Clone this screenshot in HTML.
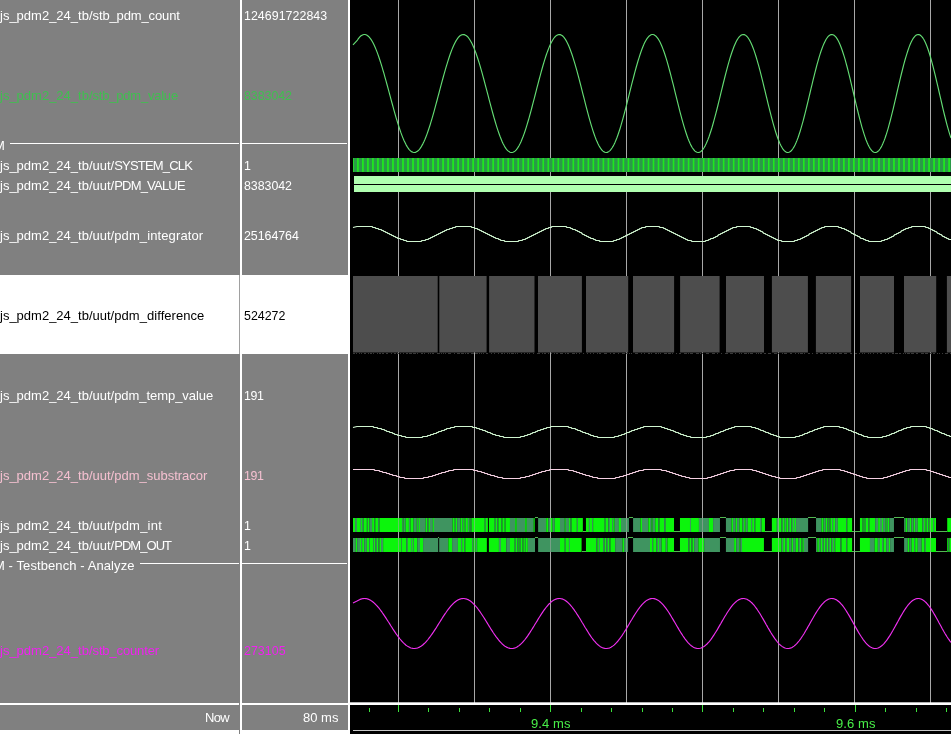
<!DOCTYPE html>
<html><head><meta charset="utf-8"><title>wave</title>
<style>
html,body{margin:0;padding:0;background:#000;}
body{width:951px;height:734px;position:relative;overflow:hidden;font-family:"Liberation Sans", sans-serif;}
.p{position:absolute;background:#808080}
.w{position:absolute;background:#fff}
.t{will-change:transform;position:absolute;font-size:13px;line-height:20px;height:20px;white-space:pre;color:#fff}
.v{font-size:12.4px}
</style></head><body>
<div class="p" style="left:0;top:0;width:239.5px;height:734px"></div>
<div class="p" style="left:241.5px;top:0;width:106px;height:734px"></div>
<div class="w" style="left:239.5px;top:0;width:2px;height:734px"></div>
<div class="w" style="left:347.5px;top:0;width:2.5px;height:734px"></div>
<!-- selected row -->
<div class="w" style="left:0;top:275px;width:347.5px;height:79px"></div>
<div class="p" style="left:239px;top:275px;width:1px;height:79px;background:#a0a0a0"></div>
<!-- group divider lines -->
<div class="w" style="left:10px;top:142.5px;width:228.5px;height:1.5px"></div>
<div class="w" style="left:241.5px;top:142.5px;width:105.5px;height:1.5px"></div>
<div class="w" style="left:139.5px;top:562.7px;width:99px;height:1.5px"></div>
<div class="w" style="left:241.5px;top:562.7px;width:105.5px;height:1.5px"></div>
<!-- now bar -->
<div class="w" style="left:0;top:703px;width:239px;height:2px"></div>
<div class="w" style="left:241.5px;top:703px;width:106px;height:2px"></div>
<div class="w" style="left:0;top:730px;width:239px;height:4px"></div>
<div class="w" style="left:242px;top:730px;width:105.5px;height:4px"></div>
<svg width="951" height="734" viewBox="0 0 951 734" style="position:absolute;left:0;top:0">
<g shape-rendering="crispEdges">
<rect x="398.0" y="0" width="1" height="702.5" fill="#a8a8a8"/>
<rect x="474.0" y="0" width="1" height="702.5" fill="#a8a8a8"/>
<rect x="550.0" y="0" width="1" height="702.5" fill="#a8a8a8"/>
<rect x="626.0" y="0" width="1" height="702.5" fill="#a8a8a8"/>
<rect x="702.0" y="0" width="1" height="702.5" fill="#a8a8a8"/>
<rect x="778.0" y="0" width="1" height="702.5" fill="#a8a8a8"/>
<rect x="854.0" y="0" width="1" height="702.5" fill="#a8a8a8"/>
<rect x="930.0" y="0" width="1" height="702.5" fill="#a8a8a8"/>
</g>
<defs>
<linearGradient id="clkg" gradientUnits="userSpaceOnUse" x1="355.4" x2="360.41" y1="0" y2="0" spreadMethod="repeat">
<stop offset="0" stop-color="#2a9a48"/><stop offset="0.25" stop-color="#2a9a48"/><stop offset="0.42" stop-color="#1ee81e"/><stop offset="0.58" stop-color="#1ee81e"/><stop offset="0.75" stop-color="#2a9a48"/><stop offset="1" stop-color="#2a9a48"/>
</linearGradient>
</defs>
<rect x="353" y="158" width="598" height="14" fill="url(#clkg)"/>
<g shape-rendering="crispEdges">
<rect x="354" y="176" width="597" height="16" fill="#b0ffb0"/>
<rect x="354" y="184" width="597" height="1" fill="#000"/>
</g>
<g id="grey">
<rect x="353.0" y="276" width="84.7" height="76.5" fill="#4d4d4d"/>
<rect x="439.3" y="276" width="47.3" height="76.5" fill="#4d4d4d"/>
<rect x="489.1" y="276" width="45.4" height="76.5" fill="#4d4d4d"/>
<rect x="538.0" y="276" width="43.9" height="76.5" fill="#4d4d4d"/>
<rect x="586.0" y="276" width="42.2" height="76.5" fill="#4d4d4d"/>
<rect x="633.0" y="276" width="41.1" height="76.5" fill="#4d4d4d"/>
<rect x="680.1" y="276" width="39.5" height="76.5" fill="#4d4d4d"/>
<rect x="726.0" y="276" width="38.0" height="76.5" fill="#4d4d4d"/>
<rect x="771.9" y="276" width="36.0" height="76.5" fill="#4d4d4d"/>
<rect x="815.9" y="276" width="35.2" height="76.5" fill="#4d4d4d"/>
<rect x="860.0" y="276" width="34.0" height="76.5" fill="#4d4d4d"/>
<rect x="904.0" y="276" width="32.2" height="76.5" fill="#4d4d4d"/>
<rect x="946.9" y="276" width="4.1" height="76.5" fill="#4d4d4d"/>
<path d="M353 353h2M356 353h1M359 353h1M361 353h1M364 353h2M368 353h1M370 353h2M373 353h1M377 353h1M379 353h2M382 353h2M386 353h2M391 353h1M394 353h2M397 353h2M400 353h1M403 353h1M406 353h2M409 353h3M413 353h3M417 353h1M421 353h2M424 353h1M428 353h1M430 353h1M432 353h2M437 353h3M441 353h1M443 353h1M445 353h1M448 353h3M454 353h1M457 353h3M461 353h3M465 353h1M467 353h2M471 353h3M475 353h3M479 353h1M481 353h1M483 353h1M486 353h2M491 353h1M494 353h1M498 353h1M501 353h2M504 353h1M507 353h1M509 353h1M511 353h3M515 353h1M517 353h1M521 353h1M524 353h1M527 353h1M529 353h1M533 353h1M537 353h3M542 353h1M544 353h2M548 353h1M551 353h1M554 353h1M556 353h2M560 353h3M565 353h1M567 353h2M572 353h3M576 353h1M579 353h1M583 353h1M587 353h1M590 353h1M593 353h1M597 353h1M599 353h2M604 353h3M610 353h1M613 353h2M618 353h1M622 353h3M626 353h2M629 353h1M631 353h1M635 353h3M641 353h1M644 353h1M648 353h2M651 353h1M655 353h2M658 353h1M660 353h1M664 353h3M668 353h3M672 353h1M676 353h1M679 353h2M684 353h3M688 353h1M690 353h3M696 353h3M700 353h1M702 353h1M706 353h3M712 353h3M717 353h1M721 353h1M725 353h3M730 353h3M735 353h1M739 353h1M741 353h1M744 353h3M748 353h1M750 353h3M756 353h1M758 353h1M760 353h2M764 353h2M768 353h3M774 353h3M778 353h1M782 353h1M784 353h3M790 353h2M795 353h1M798 353h1M800 353h3M804 353h1M808 353h2M812 353h1M816 353h2M820 353h3M825 353h2M828 353h3M833 353h1M835 353h2M839 353h3M844 353h3M850 353h2M855 353h2M859 353h1M862 353h1M864 353h1M868 353h1M870 353h1M873 353h1M877 353h1M880 353h2M885 353h1M888 353h1M892 353h2M895 353h3M899 353h2M903 353h1M905 353h1M907 353h3M911 353h3M916 353h2M921 353h3M925 353h3M930 353h2M933 353h2M937 353h1M939 353h1M942 353h1M945 353h3M950 353h1" stroke="#3a3a3a" stroke-width="1" fill="none" shape-rendering="crispEdges"/>
</g>
<g id="bars">
<rect x="353.00" y="518" width="2.10" height="14" fill="#0cf50c"/>
<rect x="355.05" y="518" width="1.94" height="14" fill="#3f9460"/>
<rect x="356.94" y="518" width="3.10" height="14" fill="#0cf50c"/>
<rect x="359.99" y="518" width="1.10" height="14" fill="#3f9460"/>
<rect x="361.04" y="518" width="1.10" height="14" fill="#0cf50c"/>
<rect x="362.09" y="518" width="1.63" height="14" fill="#3f9460"/>
<rect x="363.67" y="518" width="3.20" height="14" fill="#0cf50c"/>
<rect x="366.82" y="518" width="0.89" height="14" fill="#3f9460"/>
<rect x="367.67" y="518" width="1.84" height="14" fill="#0cf50c"/>
<rect x="369.45" y="518" width="2.68" height="14" fill="#3f9460"/>
<rect x="372.08" y="518" width="2.36" height="14" fill="#0cf50c"/>
<rect x="374.40" y="518" width="0.89" height="14" fill="#3f9460"/>
<rect x="375.24" y="518" width="2.99" height="14" fill="#0cf50c"/>
<rect x="378.18" y="518" width="1.31" height="14" fill="#3f9460"/>
<rect x="379.44" y="518" width="22.66" height="14" fill="#0cf50c"/>
<rect x="402.05" y="518" width="0.89" height="14" fill="#3f9460"/>
<rect x="402.89" y="518" width="0.79" height="14" fill="#0cf50c"/>
<rect x="403.63" y="518" width="2.15" height="14" fill="#3f9460"/>
<rect x="405.73" y="518" width="3.20" height="14" fill="#0cf50c"/>
<rect x="408.89" y="518" width="1.63" height="14" fill="#3f9460"/>
<rect x="410.46" y="518" width="3.20" height="14" fill="#0cf50c"/>
<rect x="413.62" y="518" width="3.20" height="14" fill="#3f9460"/>
<rect x="416.77" y="518" width="1.10" height="14" fill="#0cf50c"/>
<rect x="417.82" y="518" width="1.10" height="14" fill="#3f9460"/>
<rect x="418.87" y="518" width="1.10" height="14" fill="#0cf50c"/>
<rect x="419.93" y="518" width="5.83" height="14" fill="#3f9460"/>
<rect x="425.71" y="518" width="1.63" height="14" fill="#0cf50c"/>
<rect x="427.29" y="518" width="1.42" height="14" fill="#3f9460"/>
<rect x="428.65" y="518" width="1.31" height="14" fill="#0cf50c"/>
<rect x="429.92" y="518" width="2.99" height="14" fill="#3f9460"/>
<rect x="432.86" y="518" width="1.10" height="14" fill="#0cf50c"/>
<rect x="433.91" y="518" width="16.14" height="14" fill="#3f9460"/>
<rect x="450.00" y="518" width="2.68" height="14" fill="#3f9460"/>
<rect x="452.63" y="518" width="2.15" height="14" fill="#0cf50c"/>
<rect x="454.73" y="518" width="1.10" height="14" fill="#3f9460"/>
<rect x="455.78" y="518" width="1.42" height="14" fill="#0cf50c"/>
<rect x="457.15" y="518" width="3.41" height="14" fill="#3f9460"/>
<rect x="460.52" y="518" width="1.63" height="14" fill="#0cf50c"/>
<rect x="462.09" y="518" width="1.10" height="14" fill="#3f9460"/>
<rect x="463.14" y="518" width="1.63" height="14" fill="#0cf50c"/>
<rect x="464.72" y="518" width="1.10" height="14" fill="#3f9460"/>
<rect x="465.77" y="518" width="2.15" height="14" fill="#0cf50c"/>
<rect x="467.88" y="518" width="1.63" height="14" fill="#3f9460"/>
<rect x="469.45" y="518" width="1.10" height="14" fill="#0cf50c"/>
<rect x="470.50" y="518" width="1.10" height="14" fill="#3f9460"/>
<rect x="471.56" y="518" width="13.19" height="14" fill="#0cf50c"/>
<rect x="484.70" y="518" width="1.10" height="14" fill="#3f9460"/>
<rect x="485.75" y="518" width="2.15" height="14" fill="#0cf50c"/>
<rect x="488.91" y="518" width="5.83" height="14" fill="#0cf50c"/>
<rect x="494.69" y="518" width="1.10" height="14" fill="#3f9460"/>
<rect x="495.74" y="518" width="1.63" height="14" fill="#0cf50c"/>
<rect x="497.32" y="518" width="1.10" height="14" fill="#3f9460"/>
<rect x="498.37" y="518" width="3.20" height="14" fill="#0cf50c"/>
<rect x="501.52" y="518" width="0.89" height="14" fill="#3f9460"/>
<rect x="502.37" y="518" width="2.36" height="14" fill="#0cf50c"/>
<rect x="504.68" y="518" width="0.89" height="14" fill="#3f9460"/>
<rect x="505.52" y="518" width="4.47" height="14" fill="#0cf50c"/>
<rect x="509.94" y="518" width="5.31" height="14" fill="#3f9460"/>
<rect x="515.19" y="518" width="1.63" height="14" fill="#0cf50c"/>
<rect x="516.77" y="518" width="8.46" height="14" fill="#3f9460"/>
<rect x="525.18" y="518" width="1.63" height="14" fill="#0cf50c"/>
<rect x="526.76" y="518" width="6.88" height="14" fill="#3f9460"/>
<rect x="533.60" y="518" width="1.10" height="14" fill="#0cf50c"/>
<rect x="534.65" y="517" width="3.47" height="1" fill="#52b852" shape-rendering="crispEdges"/>
<rect x="538.12" y="518" width="8.15" height="14" fill="#3f9460"/>
<rect x="546.21" y="518" width="2.15" height="14" fill="#0cf50c"/>
<rect x="548.32" y="518" width="1.73" height="14" fill="#3f9460"/>
<rect x="550.00" y="518" width="2.68" height="14" fill="#0cf50c"/>
<rect x="552.63" y="518" width="2.15" height="14" fill="#3f9460"/>
<rect x="554.73" y="518" width="5.31" height="14" fill="#0cf50c"/>
<rect x="559.99" y="518" width="4.78" height="14" fill="#3f9460"/>
<rect x="564.72" y="518" width="1.10" height="14" fill="#0cf50c"/>
<rect x="565.77" y="518" width="3.20" height="14" fill="#3f9460"/>
<rect x="568.93" y="518" width="1.63" height="14" fill="#0cf50c"/>
<rect x="570.50" y="518" width="1.10" height="14" fill="#3f9460"/>
<rect x="571.56" y="518" width="5.31" height="14" fill="#0cf50c"/>
<rect x="576.81" y="518" width="1.10" height="14" fill="#3f9460"/>
<rect x="577.87" y="518" width="4.99" height="14" fill="#0cf50c"/>
<rect x="582.81" y="531" width="3.15" height="1" fill="#52b852" shape-rendering="crispEdges"/>
<rect x="585.96" y="518" width="2.99" height="14" fill="#0cf50c"/>
<rect x="588.91" y="518" width="1.10" height="14" fill="#3f9460"/>
<rect x="589.96" y="518" width="2.15" height="14" fill="#0cf50c"/>
<rect x="592.06" y="518" width="1.10" height="14" fill="#3f9460"/>
<rect x="593.11" y="518" width="11.62" height="14" fill="#0cf50c"/>
<rect x="604.68" y="518" width="1.10" height="14" fill="#3f9460"/>
<rect x="605.73" y="518" width="2.68" height="14" fill="#0cf50c"/>
<rect x="608.36" y="518" width="1.63" height="14" fill="#3f9460"/>
<rect x="609.94" y="518" width="2.15" height="14" fill="#0cf50c"/>
<rect x="612.04" y="518" width="1.10" height="14" fill="#3f9460"/>
<rect x="613.09" y="518" width="1.63" height="14" fill="#0cf50c"/>
<rect x="614.67" y="518" width="4.26" height="14" fill="#3f9460"/>
<rect x="618.87" y="518" width="2.15" height="14" fill="#0cf50c"/>
<rect x="620.98" y="518" width="7.94" height="14" fill="#3f9460"/>
<rect x="628.86" y="517" width="4.21" height="1" fill="#52b852" shape-rendering="crispEdges"/>
<rect x="633.07" y="518" width="7.41" height="14" fill="#3f9460"/>
<rect x="640.43" y="518" width="1.63" height="14" fill="#0cf50c"/>
<rect x="642.01" y="518" width="6.36" height="14" fill="#3f9460"/>
<rect x="648.32" y="518" width="1.73" height="14" fill="#0cf50c"/>
<rect x="650.00" y="518" width="1.63" height="14" fill="#3f9460"/>
<rect x="651.58" y="518" width="1.10" height="14" fill="#0cf50c"/>
<rect x="652.63" y="518" width="2.68" height="14" fill="#3f9460"/>
<rect x="655.26" y="518" width="3.20" height="14" fill="#0cf50c"/>
<rect x="658.41" y="518" width="1.10" height="14" fill="#3f9460"/>
<rect x="659.46" y="518" width="4.78" height="14" fill="#0cf50c"/>
<rect x="664.20" y="518" width="1.63" height="14" fill="#3f9460"/>
<rect x="665.77" y="518" width="8.25" height="14" fill="#0cf50c"/>
<rect x="673.97" y="531" width="5.99" height="1" fill="#52b852" shape-rendering="crispEdges"/>
<rect x="679.97" y="518" width="10.04" height="14" fill="#0cf50c"/>
<rect x="689.96" y="518" width="1.10" height="14" fill="#3f9460"/>
<rect x="691.01" y="518" width="7.94" height="14" fill="#0cf50c"/>
<rect x="698.90" y="518" width="10.04" height="14" fill="#3f9460"/>
<rect x="708.89" y="518" width="4.26" height="14" fill="#0cf50c"/>
<rect x="713.09" y="518" width="6.88" height="14" fill="#3f9460"/>
<rect x="719.93" y="517" width="5.99" height="1" fill="#52b852" shape-rendering="crispEdges"/>
<rect x="725.92" y="518" width="5.62" height="14" fill="#3f9460"/>
<rect x="731.49" y="518" width="1.63" height="14" fill="#0cf50c"/>
<rect x="733.07" y="518" width="2.68" height="14" fill="#3f9460"/>
<rect x="735.70" y="518" width="1.42" height="14" fill="#0cf50c"/>
<rect x="737.07" y="518" width="2.36" height="14" fill="#3f9460"/>
<rect x="739.38" y="518" width="3.20" height="14" fill="#0cf50c"/>
<rect x="742.53" y="518" width="1.63" height="14" fill="#3f9460"/>
<rect x="744.11" y="518" width="1.63" height="14" fill="#0cf50c"/>
<rect x="745.69" y="518" width="2.15" height="14" fill="#3f9460"/>
<rect x="747.79" y="518" width="2.26" height="14" fill="#0cf50c"/>
<rect x="750.00" y="518" width="1.10" height="14" fill="#0cf50c"/>
<rect x="751.05" y="518" width="1.10" height="14" fill="#3f9460"/>
<rect x="752.10" y="518" width="2.15" height="14" fill="#0cf50c"/>
<rect x="754.21" y="518" width="1.10" height="14" fill="#3f9460"/>
<rect x="755.26" y="518" width="4.78" height="14" fill="#0cf50c"/>
<rect x="759.99" y="518" width="1.63" height="14" fill="#3f9460"/>
<rect x="761.57" y="518" width="3.41" height="14" fill="#0cf50c"/>
<rect x="764.93" y="531" width="6.94" height="1" fill="#52b852" shape-rendering="crispEdges"/>
<rect x="771.87" y="518" width="4.99" height="14" fill="#0cf50c"/>
<rect x="776.81" y="518" width="1.63" height="14" fill="#3f9460"/>
<rect x="778.39" y="518" width="3.20" height="14" fill="#0cf50c"/>
<rect x="781.55" y="518" width="1.31" height="14" fill="#3f9460"/>
<rect x="782.81" y="518" width="1.94" height="14" fill="#0cf50c"/>
<rect x="784.70" y="518" width="1.63" height="14" fill="#3f9460"/>
<rect x="786.28" y="518" width="2.15" height="14" fill="#0cf50c"/>
<rect x="788.38" y="518" width="1.63" height="14" fill="#3f9460"/>
<rect x="789.96" y="518" width="1.63" height="14" fill="#0cf50c"/>
<rect x="791.54" y="518" width="1.42" height="14" fill="#3f9460"/>
<rect x="792.90" y="518" width="1.10" height="14" fill="#0cf50c"/>
<rect x="793.95" y="518" width="1.10" height="14" fill="#3f9460"/>
<rect x="795.01" y="518" width="1.10" height="14" fill="#0cf50c"/>
<rect x="796.06" y="518" width="12.04" height="14" fill="#3f9460"/>
<rect x="808.04" y="517" width="7.99" height="1" fill="#52b852" shape-rendering="crispEdges"/>
<rect x="816.04" y="518" width="5.52" height="14" fill="#3f9460"/>
<rect x="821.50" y="518" width="2.15" height="14" fill="#0cf50c"/>
<rect x="823.61" y="518" width="2.15" height="14" fill="#3f9460"/>
<rect x="825.71" y="518" width="1.63" height="14" fill="#0cf50c"/>
<rect x="827.29" y="518" width="1.10" height="14" fill="#3f9460"/>
<rect x="828.34" y="518" width="1.10" height="14" fill="#0cf50c"/>
<rect x="829.39" y="518" width="1.10" height="14" fill="#3f9460"/>
<rect x="830.44" y="518" width="1.63" height="14" fill="#0cf50c"/>
<rect x="832.02" y="518" width="1.10" height="14" fill="#3f9460"/>
<rect x="833.07" y="518" width="2.15" height="14" fill="#0cf50c"/>
<rect x="835.17" y="518" width="2.68" height="14" fill="#3f9460"/>
<rect x="837.80" y="518" width="8.46" height="14" fill="#0cf50c"/>
<rect x="846.21" y="518" width="1.10" height="14" fill="#3f9460"/>
<rect x="847.27" y="518" width="2.78" height="14" fill="#0cf50c"/>
<rect x="849.95" y="518" width="2.15" height="14" fill="#0cf50c"/>
<rect x="852.05" y="531" width="7.89" height="1" fill="#52b852" shape-rendering="crispEdges"/>
<rect x="859.94" y="518" width="2.68" height="14" fill="#0cf50c"/>
<rect x="862.57" y="518" width="1.10" height="14" fill="#3f9460"/>
<rect x="863.62" y="518" width="1.10" height="14" fill="#0cf50c"/>
<rect x="864.67" y="518" width="1.10" height="14" fill="#3f9460"/>
<rect x="865.72" y="518" width="2.68" height="14" fill="#0cf50c"/>
<rect x="868.35" y="518" width="1.10" height="14" fill="#3f9460"/>
<rect x="869.40" y="518" width="5.83" height="14" fill="#0cf50c"/>
<rect x="875.19" y="518" width="2.99" height="14" fill="#3f9460"/>
<rect x="878.13" y="518" width="1.84" height="14" fill="#0cf50c"/>
<rect x="879.92" y="518" width="2.15" height="14" fill="#3f9460"/>
<rect x="882.02" y="518" width="1.10" height="14" fill="#0cf50c"/>
<rect x="883.07" y="518" width="2.68" height="14" fill="#3f9460"/>
<rect x="885.70" y="518" width="1.10" height="14" fill="#0cf50c"/>
<rect x="886.75" y="518" width="1.10" height="14" fill="#3f9460"/>
<rect x="887.80" y="518" width="1.63" height="14" fill="#0cf50c"/>
<rect x="889.38" y="518" width="4.57" height="14" fill="#3f9460"/>
<rect x="893.90" y="517" width="10.20" height="1" fill="#52b852" shape-rendering="crispEdges"/>
<rect x="904.10" y="518" width="1.63" height="14" fill="#3f9460"/>
<rect x="905.68" y="518" width="1.63" height="14" fill="#0cf50c"/>
<rect x="907.26" y="518" width="2.68" height="14" fill="#3f9460"/>
<rect x="909.89" y="518" width="1.63" height="14" fill="#0cf50c"/>
<rect x="911.46" y="518" width="2.15" height="14" fill="#3f9460"/>
<rect x="913.57" y="518" width="1.63" height="14" fill="#0cf50c"/>
<rect x="915.14" y="518" width="2.68" height="14" fill="#3f9460"/>
<rect x="917.77" y="518" width="4.78" height="14" fill="#0cf50c"/>
<rect x="922.50" y="518" width="1.63" height="14" fill="#3f9460"/>
<rect x="924.08" y="518" width="1.63" height="14" fill="#0cf50c"/>
<rect x="925.66" y="518" width="1.10" height="14" fill="#3f9460"/>
<rect x="926.71" y="518" width="1.63" height="14" fill="#0cf50c"/>
<rect x="928.29" y="518" width="1.10" height="14" fill="#3f9460"/>
<rect x="929.34" y="518" width="3.73" height="14" fill="#0cf50c"/>
<rect x="933.02" y="518" width="1.10" height="14" fill="#3f9460"/>
<rect x="934.07" y="518" width="1.94" height="14" fill="#0cf50c"/>
<rect x="935.96" y="531" width="11.25" height="1" fill="#52b852" shape-rendering="crispEdges"/>
<rect x="947.21" y="518" width="3.84" height="14" fill="#0cf50c"/>
<rect x="353.00" y="538" width="2.83" height="14" fill="#3f9460"/>
<rect x="355.78" y="538" width="1.42" height="14" fill="#0cf50c"/>
<rect x="357.15" y="538" width="2.89" height="14" fill="#3f9460"/>
<rect x="359.99" y="538" width="1.10" height="14" fill="#0cf50c"/>
<rect x="361.04" y="538" width="1.10" height="14" fill="#3f9460"/>
<rect x="362.09" y="538" width="2.15" height="14" fill="#0cf50c"/>
<rect x="364.20" y="538" width="2.68" height="14" fill="#3f9460"/>
<rect x="366.82" y="538" width="2.36" height="14" fill="#0cf50c"/>
<rect x="369.14" y="538" width="0.89" height="14" fill="#3f9460"/>
<rect x="369.98" y="538" width="3.20" height="14" fill="#0cf50c"/>
<rect x="373.13" y="538" width="0.89" height="14" fill="#3f9460"/>
<rect x="373.97" y="538" width="1.31" height="14" fill="#0cf50c"/>
<rect x="375.24" y="538" width="1.63" height="14" fill="#3f9460"/>
<rect x="376.81" y="538" width="1.63" height="14" fill="#0cf50c"/>
<rect x="378.39" y="538" width="1.10" height="14" fill="#3f9460"/>
<rect x="379.44" y="538" width="1.63" height="14" fill="#0cf50c"/>
<rect x="381.02" y="538" width="2.15" height="14" fill="#3f9460"/>
<rect x="383.12" y="538" width="17.93" height="14" fill="#0cf50c"/>
<rect x="401.00" y="538" width="0.79" height="14" fill="#3f9460"/>
<rect x="401.74" y="538" width="4.57" height="14" fill="#0cf50c"/>
<rect x="406.26" y="538" width="1.63" height="14" fill="#3f9460"/>
<rect x="407.83" y="538" width="3.20" height="14" fill="#0cf50c"/>
<rect x="410.99" y="538" width="1.10" height="14" fill="#3f9460"/>
<rect x="412.04" y="538" width="1.10" height="14" fill="#0cf50c"/>
<rect x="413.09" y="538" width="0.89" height="14" fill="#3f9460"/>
<rect x="413.93" y="538" width="3.41" height="14" fill="#0cf50c"/>
<rect x="417.30" y="538" width="2.68" height="14" fill="#3f9460"/>
<rect x="419.93" y="538" width="3.20" height="14" fill="#0cf50c"/>
<rect x="423.08" y="538" width="15.09" height="14" fill="#3f9460"/>
<rect x="438.12" y="537" width="1.05" height="1" fill="#52b852" shape-rendering="crispEdges"/>
<rect x="439.17" y="538" width="9.20" height="14" fill="#3f9460"/>
<rect x="448.32" y="538" width="1.73" height="14" fill="#0cf50c"/>
<rect x="450.00" y="538" width="2.15" height="14" fill="#0cf50c"/>
<rect x="452.10" y="538" width="5.83" height="14" fill="#3f9460"/>
<rect x="457.89" y="538" width="3.20" height="14" fill="#0cf50c"/>
<rect x="461.04" y="538" width="1.10" height="14" fill="#3f9460"/>
<rect x="462.09" y="538" width="2.15" height="14" fill="#0cf50c"/>
<rect x="464.20" y="538" width="1.10" height="14" fill="#3f9460"/>
<rect x="465.25" y="538" width="6.88" height="14" fill="#0cf50c"/>
<rect x="472.08" y="538" width="1.31" height="14" fill="#3f9460"/>
<rect x="473.34" y="538" width="2.47" height="14" fill="#0cf50c"/>
<rect x="475.76" y="538" width="1.42" height="14" fill="#3f9460"/>
<rect x="477.13" y="538" width="9.72" height="14" fill="#0cf50c"/>
<rect x="488.91" y="538" width="10.04" height="14" fill="#0cf50c"/>
<rect x="498.90" y="538" width="2.15" height="14" fill="#3f9460"/>
<rect x="501.00" y="538" width="5.31" height="14" fill="#0cf50c"/>
<rect x="506.26" y="538" width="3.73" height="14" fill="#3f9460"/>
<rect x="509.94" y="538" width="4.78" height="14" fill="#0cf50c"/>
<rect x="514.67" y="538" width="1.10" height="14" fill="#3f9460"/>
<rect x="515.72" y="538" width="1.63" height="14" fill="#0cf50c"/>
<rect x="517.30" y="538" width="1.10" height="14" fill="#3f9460"/>
<rect x="518.35" y="538" width="1.31" height="14" fill="#0cf50c"/>
<rect x="519.61" y="538" width="1.10" height="14" fill="#3f9460"/>
<rect x="520.66" y="538" width="1.94" height="14" fill="#0cf50c"/>
<rect x="522.56" y="538" width="0.89" height="14" fill="#3f9460"/>
<rect x="523.40" y="538" width="1.52" height="14" fill="#0cf50c"/>
<rect x="524.87" y="538" width="0.89" height="14" fill="#3f9460"/>
<rect x="525.71" y="538" width="2.15" height="14" fill="#0cf50c"/>
<rect x="527.81" y="538" width="7.20" height="14" fill="#3f9460"/>
<rect x="534.96" y="537" width="3.15" height="1" fill="#52b852" shape-rendering="crispEdges"/>
<rect x="538.12" y="538" width="11.93" height="14" fill="#3f9460"/>
<rect x="550.00" y="538" width="10.04" height="14" fill="#3f9460"/>
<rect x="559.99" y="538" width="4.78" height="14" fill="#0cf50c"/>
<rect x="564.72" y="538" width="1.10" height="14" fill="#3f9460"/>
<rect x="565.77" y="538" width="3.20" height="14" fill="#0cf50c"/>
<rect x="568.93" y="538" width="1.10" height="14" fill="#3f9460"/>
<rect x="569.98" y="538" width="11.62" height="14" fill="#0cf50c"/>
<rect x="581.55" y="551" width="4.42" height="1" fill="#52b852" shape-rendering="crispEdges"/>
<rect x="585.96" y="538" width="10.35" height="14" fill="#0cf50c"/>
<rect x="596.27" y="538" width="1.10" height="14" fill="#3f9460"/>
<rect x="597.32" y="538" width="1.63" height="14" fill="#0cf50c"/>
<rect x="598.90" y="538" width="1.10" height="14" fill="#3f9460"/>
<rect x="599.95" y="538" width="3.20" height="14" fill="#0cf50c"/>
<rect x="603.10" y="538" width="1.63" height="14" fill="#3f9460"/>
<rect x="604.68" y="538" width="1.63" height="14" fill="#0cf50c"/>
<rect x="606.26" y="538" width="1.63" height="14" fill="#3f9460"/>
<rect x="607.83" y="538" width="1.63" height="14" fill="#0cf50c"/>
<rect x="609.41" y="538" width="1.10" height="14" fill="#3f9460"/>
<rect x="610.46" y="538" width="4.78" height="14" fill="#0cf50c"/>
<rect x="615.19" y="538" width="7.41" height="14" fill="#3f9460"/>
<rect x="622.56" y="538" width="1.63" height="14" fill="#0cf50c"/>
<rect x="624.13" y="538" width="3.94" height="14" fill="#3f9460"/>
<rect x="628.02" y="537" width="5.05" height="1" fill="#52b852" shape-rendering="crispEdges"/>
<rect x="633.07" y="538" width="16.98" height="14" fill="#3f9460"/>
<rect x="650.00" y="538" width="2.15" height="14" fill="#0cf50c"/>
<rect x="652.10" y="538" width="1.10" height="14" fill="#3f9460"/>
<rect x="653.15" y="538" width="3.20" height="14" fill="#0cf50c"/>
<rect x="656.31" y="538" width="1.63" height="14" fill="#3f9460"/>
<rect x="657.89" y="538" width="1.10" height="14" fill="#0cf50c"/>
<rect x="658.94" y="538" width="2.68" height="14" fill="#3f9460"/>
<rect x="661.57" y="538" width="4.26" height="14" fill="#0cf50c"/>
<rect x="665.77" y="538" width="1.63" height="14" fill="#3f9460"/>
<rect x="667.35" y="538" width="6.67" height="14" fill="#0cf50c"/>
<rect x="673.97" y="551" width="5.99" height="1" fill="#52b852" shape-rendering="crispEdges"/>
<rect x="679.97" y="538" width="8.46" height="14" fill="#0cf50c"/>
<rect x="688.38" y="538" width="1.10" height="14" fill="#3f9460"/>
<rect x="689.43" y="538" width="2.15" height="14" fill="#0cf50c"/>
<rect x="691.54" y="538" width="1.10" height="14" fill="#3f9460"/>
<rect x="692.59" y="538" width="1.63" height="14" fill="#0cf50c"/>
<rect x="694.16" y="538" width="4.26" height="14" fill="#3f9460"/>
<rect x="698.37" y="538" width="5.83" height="14" fill="#0cf50c"/>
<rect x="704.15" y="538" width="15.82" height="14" fill="#3f9460"/>
<rect x="719.93" y="537" width="5.99" height="1" fill="#52b852" shape-rendering="crispEdges"/>
<rect x="725.92" y="538" width="8.25" height="14" fill="#3f9460"/>
<rect x="734.12" y="538" width="2.15" height="14" fill="#0cf50c"/>
<rect x="736.23" y="538" width="3.20" height="14" fill="#3f9460"/>
<rect x="739.38" y="538" width="1.10" height="14" fill="#0cf50c"/>
<rect x="740.43" y="538" width="1.63" height="14" fill="#3f9460"/>
<rect x="742.01" y="538" width="8.04" height="14" fill="#0cf50c"/>
<rect x="750.00" y="538" width="13.93" height="14" fill="#0cf50c"/>
<rect x="763.88" y="551" width="7.99" height="1" fill="#52b852" shape-rendering="crispEdges"/>
<rect x="771.87" y="538" width="9.72" height="14" fill="#0cf50c"/>
<rect x="781.55" y="538" width="1.63" height="14" fill="#3f9460"/>
<rect x="783.12" y="538" width="2.15" height="14" fill="#0cf50c"/>
<rect x="785.23" y="538" width="1.63" height="14" fill="#3f9460"/>
<rect x="786.80" y="538" width="2.36" height="14" fill="#0cf50c"/>
<rect x="789.12" y="538" width="2.47" height="14" fill="#3f9460"/>
<rect x="791.54" y="538" width="1.63" height="14" fill="#0cf50c"/>
<rect x="793.11" y="538" width="2.68" height="14" fill="#3f9460"/>
<rect x="795.74" y="538" width="2.68" height="14" fill="#0cf50c"/>
<rect x="798.37" y="538" width="1.63" height="14" fill="#3f9460"/>
<rect x="799.95" y="538" width="1.63" height="14" fill="#0cf50c"/>
<rect x="801.52" y="538" width="1.10" height="14" fill="#3f9460"/>
<rect x="802.58" y="538" width="1.31" height="14" fill="#0cf50c"/>
<rect x="803.84" y="538" width="4.26" height="14" fill="#3f9460"/>
<rect x="808.04" y="537" width="7.99" height="1" fill="#52b852" shape-rendering="crispEdges"/>
<rect x="816.04" y="538" width="1.31" height="14" fill="#3f9460"/>
<rect x="817.30" y="538" width="1.63" height="14" fill="#0cf50c"/>
<rect x="818.87" y="538" width="1.84" height="14" fill="#3f9460"/>
<rect x="820.66" y="538" width="1.42" height="14" fill="#0cf50c"/>
<rect x="822.03" y="538" width="1.63" height="14" fill="#3f9460"/>
<rect x="823.61" y="538" width="1.63" height="14" fill="#0cf50c"/>
<rect x="825.18" y="538" width="1.63" height="14" fill="#3f9460"/>
<rect x="826.76" y="538" width="1.63" height="14" fill="#0cf50c"/>
<rect x="828.34" y="538" width="1.63" height="14" fill="#3f9460"/>
<rect x="829.92" y="538" width="1.63" height="14" fill="#0cf50c"/>
<rect x="831.49" y="538" width="1.63" height="14" fill="#3f9460"/>
<rect x="833.07" y="538" width="1.10" height="14" fill="#0cf50c"/>
<rect x="834.12" y="538" width="1.10" height="14" fill="#3f9460"/>
<rect x="835.17" y="538" width="5.31" height="14" fill="#0cf50c"/>
<rect x="840.43" y="538" width="1.10" height="14" fill="#3f9460"/>
<rect x="841.48" y="538" width="4.78" height="14" fill="#0cf50c"/>
<rect x="846.21" y="538" width="1.10" height="14" fill="#3f9460"/>
<rect x="847.27" y="538" width="2.78" height="14" fill="#0cf50c"/>
<rect x="849.95" y="538" width="2.15" height="14" fill="#0cf50c"/>
<rect x="852.05" y="551" width="7.89" height="1" fill="#52b852" shape-rendering="crispEdges"/>
<rect x="859.94" y="538" width="10.04" height="14" fill="#0cf50c"/>
<rect x="869.93" y="538" width="4.78" height="14" fill="#3f9460"/>
<rect x="874.66" y="538" width="3.20" height="14" fill="#0cf50c"/>
<rect x="877.81" y="538" width="2.15" height="14" fill="#3f9460"/>
<rect x="879.92" y="538" width="2.15" height="14" fill="#0cf50c"/>
<rect x="882.02" y="538" width="1.63" height="14" fill="#3f9460"/>
<rect x="883.60" y="538" width="2.68" height="14" fill="#0cf50c"/>
<rect x="886.23" y="538" width="2.68" height="14" fill="#3f9460"/>
<rect x="888.85" y="538" width="1.31" height="14" fill="#0cf50c"/>
<rect x="890.12" y="538" width="3.84" height="14" fill="#3f9460"/>
<rect x="893.90" y="537" width="10.20" height="1" fill="#52b852" shape-rendering="crispEdges"/>
<rect x="904.10" y="538" width="3.73" height="14" fill="#3f9460"/>
<rect x="907.78" y="538" width="1.63" height="14" fill="#0cf50c"/>
<rect x="909.36" y="538" width="2.15" height="14" fill="#3f9460"/>
<rect x="911.46" y="538" width="2.68" height="14" fill="#0cf50c"/>
<rect x="914.09" y="538" width="1.10" height="14" fill="#3f9460"/>
<rect x="915.14" y="538" width="2.68" height="14" fill="#0cf50c"/>
<rect x="917.77" y="538" width="3.94" height="14" fill="#3f9460"/>
<rect x="921.66" y="538" width="2.99" height="14" fill="#0cf50c"/>
<rect x="924.61" y="538" width="1.31" height="14" fill="#3f9460"/>
<rect x="925.87" y="538" width="10.14" height="14" fill="#0cf50c"/>
<rect x="935.96" y="551" width="11.25" height="1" fill="#52b852" shape-rendering="crispEdges"/>
<rect x="947.21" y="538" width="1.10" height="14" fill="#0cf50c"/>
<rect x="948.27" y="538" width="1.10" height="14" fill="#3f9460"/>
<rect x="949.32" y="538" width="1.73" height="14" fill="#0cf50c"/>
</g>
<g shape-rendering="crispEdges"><rect x="398.0" y="517" width="1" height="36" fill="#a8a8a8" opacity="0.55"/>
<rect x="474.0" y="517" width="1" height="36" fill="#a8a8a8" opacity="0.55"/>
<rect x="550.0" y="517" width="1" height="36" fill="#a8a8a8" opacity="0.55"/>
<rect x="626.0" y="517" width="1" height="36" fill="#a8a8a8" opacity="0.55"/>
<rect x="702.0" y="517" width="1" height="36" fill="#a8a8a8" opacity="0.55"/>
<rect x="778.0" y="517" width="1" height="36" fill="#a8a8a8" opacity="0.55"/>
<rect x="854.0" y="517" width="1" height="36" fill="#a8a8a8" opacity="0.55"/>
<rect x="930.0" y="517" width="1" height="36" fill="#a8a8a8" opacity="0.55"/></g>
<g id="waves">
<polyline points="353.0,44.8 357.0,40.7 358.0,39.2 359.0,37.8 360.0,36.7 361.0,35.8 362.0,35.2 363.0,34.7 364.0,34.5 365.0,34.5 366.0,34.8 367.0,35.3 368.0,36.0 369.0,36.9 370.0,38.1 371.0,39.4 372.0,41.0 373.0,42.8 374.0,44.8 375.0,47.0 376.0,49.4 377.0,51.9 378.0,54.6 379.0,57.5 380.0,60.5 381.0,63.6 382.0,66.9 383.0,70.3 384.0,73.7 385.0,77.3 386.0,80.9 387.0,84.5 388.0,88.2 389.0,91.9 390.0,95.6 391.0,99.4 392.0,103.0 393.0,106.7 394.0,110.3 395.0,113.8 396.0,117.3 397.0,120.7 398.0,123.9 399.0,127.0 400.0,130.0 401.0,132.9 402.0,135.6 403.0,138.1 404.0,140.5 405.0,142.6 406.0,144.6 407.0,146.4 408.0,147.9 409.0,149.3 410.0,150.4 411.0,151.3 412.0,151.9 413.0,152.3 414.0,152.5 415.0,152.4 416.0,152.1 417.0,151.6 418.0,150.8 419.0,149.8 420.0,148.6 421.0,147.1 422.0,145.4 423.0,143.6 424.0,141.5 425.0,139.2 426.0,136.7 427.0,134.1 428.0,131.3 429.0,128.3 430.0,125.2 431.0,121.9 432.0,118.6 433.0,115.1 434.0,111.6 435.0,107.9 436.0,104.2 437.0,100.5 438.0,96.7 439.0,93.0 440.0,89.2 441.0,85.4 442.0,81.7 443.0,78.0 444.0,74.4 445.0,70.9 446.0,67.4 447.0,64.1 448.0,60.9 449.0,57.8 450.0,54.8 451.0,52.0 452.0,49.4 453.0,47.0 454.0,44.8 455.0,42.7 456.0,40.9 457.0,39.3 458.0,37.9 459.0,36.7 460.0,35.8 461.0,35.1 462.0,34.7 463.0,34.5 464.0,34.6 465.0,34.9 466.0,35.4 467.0,36.2 468.0,37.2 469.0,38.5 470.0,40.0 471.0,41.7 472.0,43.6 473.0,45.7 474.0,48.1 475.0,50.6 476.0,53.3 477.0,56.2 478.0,59.2 479.0,62.4 480.0,65.7 481.0,69.2 482.0,72.7 483.0,76.3 484.0,80.0 485.0,83.8 486.0,87.6 487.0,91.4 488.0,95.2 489.0,99.1 490.0,102.9 491.0,106.6 492.0,110.4 493.0,114.0 494.0,117.6 495.0,121.0 496.0,124.4 497.0,127.6 498.0,130.6 499.0,133.5 500.0,136.3 501.0,138.8 502.0,141.2 503.0,143.4 504.0,145.3 505.0,147.1 506.0,148.6 507.0,149.8 508.0,150.9 509.0,151.6 510.0,152.2 511.0,152.5 512.0,152.5 513.0,152.3 514.0,151.8 515.0,151.1 516.0,150.1 517.0,148.9 518.0,147.4 519.0,145.7 520.0,143.8 521.0,141.7 522.0,139.3 523.0,136.8 524.0,134.1 525.0,131.2 526.0,128.1 527.0,124.9 528.0,121.5 529.0,118.1 530.0,114.5 531.0,110.8 532.0,107.0 533.0,103.2 534.0,99.4 535.0,95.5 536.0,91.6 537.0,87.7 538.0,83.9 539.0,80.0 540.0,76.3 541.0,72.6 542.0,69.0 543.0,65.5 544.0,62.1 545.0,58.9 546.0,55.8 547.0,52.9 548.0,50.2 549.0,47.6 550.0,45.2 551.0,43.1 552.0,41.2 553.0,39.5 554.0,38.0 555.0,36.8 556.0,35.9 557.0,35.2 558.0,34.7 559.0,34.5 560.0,34.6 561.0,34.9 562.0,35.5 563.0,36.3 564.0,37.4 565.0,38.8 566.0,40.4 567.0,42.2 568.0,44.2 569.0,46.5 570.0,49.0 571.0,51.7 572.0,54.5 573.0,57.6 574.0,60.8 575.0,64.1 576.0,67.6 577.0,71.2 578.0,74.9 579.0,78.7 580.0,82.5 581.0,86.4 582.0,90.4 583.0,94.3 584.0,98.2 585.0,102.2 586.0,106.1 587.0,109.9 588.0,113.6 589.0,117.3 590.0,120.9 591.0,124.3 592.0,127.6 593.0,130.8 594.0,133.8 595.0,136.6 596.0,139.2 597.0,141.6 598.0,143.8 599.0,145.7 600.0,147.4 601.0,148.9 602.0,150.2 603.0,151.1 604.0,151.9 605.0,152.3 606.0,152.5 607.0,152.4 608.0,152.1 609.0,151.4 610.0,150.6 611.0,149.4 612.0,148.0 613.0,146.4 614.0,144.5 615.0,142.4 616.0,140.0 617.0,137.5 618.0,134.7 619.0,131.8 620.0,128.7 621.0,125.4 622.0,121.9 623.0,118.4 624.0,114.7 625.0,110.9 626.0,107.1 627.0,103.2 628.0,99.2 629.0,95.2 630.0,91.2 631.0,87.2 632.0,83.2 633.0,79.3 634.0,75.5 635.0,71.7 636.0,68.0 637.0,64.5 638.0,61.0 639.0,57.8 640.0,54.7 641.0,51.7 642.0,49.0 643.0,46.5 644.0,44.1 645.0,42.1 646.0,40.2 647.0,38.6 648.0,37.3 649.0,36.2 650.0,35.4 651.0,34.8 652.0,34.5 653.0,34.5 654.0,34.8 655.0,35.4 656.0,36.2 657.0,37.3 658.0,38.6 659.0,40.2 660.0,42.1 661.0,44.2 662.0,46.5 663.0,49.1 664.0,51.8 665.0,54.8 666.0,57.9 667.0,61.2 668.0,64.7 669.0,68.3 670.0,72.0 671.0,75.9 672.0,79.8 673.0,83.7 674.0,87.7 675.0,91.8 676.0,95.8 677.0,99.9 678.0,103.9 679.0,107.9 680.0,111.8 681.0,115.6 682.0,119.3 683.0,122.9 684.0,126.4 685.0,129.7 686.0,132.8 687.0,135.7 688.0,138.5 689.0,141.0 690.0,143.3 691.0,145.4 692.0,147.2 693.0,148.7 694.0,150.0 695.0,151.1 696.0,151.8 697.0,152.3 698.0,152.5 699.0,152.4 700.0,152.0 701.0,151.4 702.0,150.5 703.0,149.3 704.0,147.8 705.0,146.1 706.0,144.1 707.0,141.8 708.0,139.4 709.0,136.7 710.0,133.8 711.0,130.7 712.0,127.5 713.0,124.0 714.0,120.4 715.0,116.7 716.0,112.9 717.0,109.0 718.0,105.0 719.0,100.9 720.0,96.8 721.0,92.7 722.0,88.6 723.0,84.5 724.0,80.5 725.0,76.5 726.0,72.6 727.0,68.8 728.0,65.2 729.0,61.6 730.0,58.2 731.0,55.0 732.0,52.0 733.0,49.2 734.0,46.5 735.0,44.2 736.0,42.0 737.0,40.1 738.0,38.5 739.0,37.1 740.0,36.1 741.0,35.3 742.0,34.7 743.0,34.5 744.0,34.6 745.0,34.9 746.0,35.6 747.0,36.5 748.0,37.7 749.0,39.2 750.0,40.9 751.0,42.9 752.0,45.2 753.0,47.7 754.0,50.4 755.0,53.4 756.0,56.5 757.0,59.8 758.0,63.3 759.0,66.9 760.0,70.7 761.0,74.6 762.0,78.6 763.0,82.6 764.0,86.8 765.0,90.9 766.0,95.1 767.0,99.2 768.0,103.4 769.0,107.4 770.0,111.4 771.0,115.4 772.0,119.2 773.0,122.9 774.0,126.4 775.0,129.8 776.0,133.0 777.0,136.0 778.0,138.8 779.0,141.3 780.0,143.7 781.0,145.7 782.0,147.5 783.0,149.1 784.0,150.4 785.0,151.3 786.0,152.0 787.0,152.4 788.0,152.5 789.0,152.3 790.0,151.8 791.0,151.0 792.0,149.9 793.0,148.5 794.0,146.9 795.0,145.0 796.0,142.8 797.0,140.4 798.0,137.7 799.0,134.8 800.0,131.7 801.0,128.4 802.0,124.9 803.0,121.3 804.0,117.5 805.0,113.6 806.0,109.6 807.0,105.5 808.0,101.4 809.0,97.2 810.0,93.0 811.0,88.7 812.0,84.6 813.0,80.4 814.0,76.3 815.0,72.4 816.0,68.5 817.0,64.7 818.0,61.1 819.0,57.7 820.0,54.4 821.0,51.3 822.0,48.5 823.0,45.9 824.0,43.5 825.0,41.4 826.0,39.5 827.0,38.0 828.0,36.7 829.0,35.7 830.0,35.0 831.0,34.6 832.0,34.5 833.0,34.7 834.0,35.2 835.0,36.1 836.0,37.2 837.0,38.6 838.0,40.3 839.0,42.3 840.0,44.5 841.0,47.0 842.0,49.7 843.0,52.7 844.0,55.9 845.0,59.2 846.0,62.8 847.0,66.5 848.0,70.3 849.0,74.3 850.0,78.4 851.0,82.6 852.0,86.8 853.0,91.0 854.0,95.3 855.0,99.5 856.0,103.8 857.0,107.9 858.0,112.0 859.0,116.0 860.0,119.9 861.0,123.7 862.0,127.3 863.0,130.7 864.0,133.9 865.0,136.9 866.0,139.7 867.0,142.2 868.0,144.5 869.0,146.5 870.0,148.3 871.0,149.7 872.0,150.9 873.0,151.7 874.0,152.3 875.0,152.5 876.0,152.4 877.0,152.0 878.0,151.3 879.0,150.3 880.0,149.0 881.0,147.4 882.0,145.5 883.0,143.3 884.0,140.9 885.0,138.2 886.0,135.3 887.0,132.1 888.0,128.8 889.0,125.2 890.0,121.5 891.0,117.7 892.0,113.7 893.0,109.6 894.0,105.4 895.0,101.1 896.0,96.8 897.0,92.5 898.0,88.2 899.0,83.9 900.0,79.7 901.0,75.5 902.0,71.5 903.0,67.5 904.0,63.7 905.0,60.0 906.0,56.6 907.0,53.3 908.0,50.2 909.0,47.4 910.0,44.8 911.0,42.5 912.0,40.5 913.0,38.7 914.0,37.3 915.0,36.1 916.0,35.3 917.0,34.7 918.0,34.5 919.0,34.6 920.0,35.0 921.0,35.8 922.0,36.8 923.0,38.2 924.0,39.8 925.0,41.8 926.0,44.0 927.0,46.5 928.0,49.3 929.0,52.3 930.0,55.5 931.0,59.0 932.0,62.6 933.0,66.4 934.0,70.3 935.0,74.4 936.0,78.6 937.0,82.8 938.0,87.1 939.0,91.5 940.0,95.9 941.0,100.2 942.0,104.5 943.0,108.8 944.0,113.0 945.0,117.0 946.0,121.0 947.0,124.8 948.0,128.4 949.0,131.8 950.0,135.1 951.0,138.0" fill="none" stroke="#64dc74" stroke-width="1.15" stroke-linejoin="round"/>
<polyline points="353.0,227.5 357.0,226.5 358.0,226.5 359.0,226.5 360.0,226.5 361.0,226.5 362.0,226.5 363.0,226.5 364.0,226.5 365.0,226.5 366.0,226.5 367.0,226.5 368.0,226.5 369.0,226.5 370.0,226.5 371.0,226.5 372.0,226.5 373.0,227.5 374.0,227.5 375.0,227.5 376.0,228.5 377.0,228.5 378.0,228.5 379.0,229.5 380.0,229.5 381.0,229.5 382.0,230.5 383.0,230.5 384.0,231.5 385.0,231.5 386.0,232.5 387.0,232.5 388.0,233.5 389.0,233.5 390.0,234.5 391.0,234.5 392.0,235.5 393.0,235.5 394.0,236.5 395.0,236.5 396.0,237.5 397.0,237.5 398.0,238.5 399.0,238.5 400.0,238.5 401.0,239.5 402.0,239.5 403.0,239.5 404.0,240.5 405.0,240.5 406.0,240.5 407.0,241.5 408.0,241.5 409.0,241.5 410.0,241.5 411.0,241.5 412.0,241.5 413.0,241.5 414.0,241.5 415.0,241.5 416.0,241.5 417.0,241.5 418.0,241.5 419.0,241.5 420.0,241.5 421.0,241.5 422.0,240.5 423.0,240.5 424.0,240.5 425.0,240.5 426.0,239.5 427.0,239.5 428.0,239.5 429.0,238.5 430.0,238.5 431.0,237.5 432.0,237.5 433.0,236.5 434.0,236.5 435.0,235.5 436.0,235.5 437.0,234.5 438.0,234.5 439.0,233.5 440.0,233.5 441.0,232.5 442.0,232.5 443.0,231.5 444.0,231.5 445.0,230.5 446.0,230.5 447.0,229.5 448.0,229.5 449.0,229.5 450.0,228.5 451.0,228.5 452.0,228.5 453.0,227.5 454.0,227.5 455.0,227.5 456.0,226.5 457.0,226.5 458.0,226.5 459.0,226.5 460.0,226.5 461.0,226.5 462.0,226.5 463.0,226.5 464.0,226.5 465.0,226.5 466.0,226.5 467.0,226.5 468.0,226.5 469.0,226.5 470.0,226.5 471.0,226.5 472.0,227.5 473.0,227.5 474.0,227.5 475.0,228.5 476.0,228.5 477.0,228.5 478.0,229.5 479.0,229.5 480.0,230.5 481.0,230.5 482.0,231.5 483.0,231.5 484.0,232.5 485.0,232.5 486.0,233.5 487.0,233.5 488.0,234.5 489.0,234.5 490.0,235.5 491.0,235.5 492.0,236.5 493.0,236.5 494.0,237.5 495.0,237.5 496.0,238.5 497.0,238.5 498.0,238.5 499.0,239.5 500.0,239.5 501.0,240.5 502.0,240.5 503.0,240.5 504.0,240.5 505.0,241.5 506.0,241.5 507.0,241.5 508.0,241.5 509.0,241.5 510.0,241.5 511.0,241.5 512.0,241.5 513.0,241.5 514.0,241.5 515.0,241.5 516.0,241.5 517.0,241.5 518.0,241.5 519.0,240.5 520.0,240.5 521.0,240.5 522.0,240.5 523.0,239.5 524.0,239.5 525.0,239.5 526.0,238.5 527.0,238.5 528.0,237.5 529.0,237.5 530.0,236.5 531.0,236.5 532.0,235.5 533.0,235.5 534.0,234.5 535.0,234.5 536.0,233.5 537.0,233.5 538.0,232.5 539.0,232.5 540.0,231.5 541.0,231.5 542.0,230.5 543.0,230.5 544.0,229.5 545.0,229.5 546.0,228.5 547.0,228.5 548.0,228.5 549.0,227.5 550.0,227.5 551.0,227.5 552.0,226.5 553.0,226.5 554.0,226.5 555.0,226.5 556.0,226.5 557.0,226.5 558.0,226.5 559.0,226.5 560.0,226.5 561.0,226.5 562.0,226.5 563.0,226.5 564.0,226.5 565.0,226.5 566.0,226.5 567.0,227.5 568.0,227.5 569.0,227.5 570.0,227.5 571.0,228.5 572.0,228.5 573.0,229.5 574.0,229.5 575.0,229.5 576.0,230.5 577.0,230.5 578.0,231.5 579.0,231.5 580.0,232.5 581.0,232.5 582.0,233.5 583.0,234.5 584.0,234.5 585.0,235.5 586.0,235.5 587.0,236.5 588.0,236.5 589.0,237.5 590.0,237.5 591.0,238.5 592.0,238.5 593.0,238.5 594.0,239.5 595.0,239.5 596.0,240.5 597.0,240.5 598.0,240.5 599.0,240.5 600.0,241.5 601.0,241.5 602.0,241.5 603.0,241.5 604.0,241.5 605.0,241.5 606.0,241.5 607.0,241.5 608.0,241.5 609.0,241.5 610.0,241.5 611.0,241.5 612.0,241.5 613.0,241.5 614.0,240.5 615.0,240.5 616.0,240.5 617.0,239.5 618.0,239.5 619.0,239.5 620.0,238.5 621.0,238.5 622.0,237.5 623.0,237.5 624.0,236.5 625.0,236.5 626.0,235.5 627.0,235.5 628.0,234.5 629.0,234.5 630.0,233.5 631.0,233.5 632.0,232.5 633.0,232.5 634.0,231.5 635.0,231.5 636.0,230.5 637.0,230.5 638.0,229.5 639.0,229.5 640.0,228.5 641.0,228.5 642.0,227.5 643.0,227.5 644.0,227.5 645.0,227.5 646.0,226.5 647.0,226.5 648.0,226.5 649.0,226.5 650.0,226.5 651.0,226.5 652.0,226.5 653.0,226.5 654.0,226.5 655.0,226.5 656.0,226.5 657.0,226.5 658.0,226.5 659.0,226.5 660.0,227.5 661.0,227.5 662.0,227.5 663.0,227.5 664.0,228.5 665.0,228.5 666.0,229.5 667.0,229.5 668.0,230.5 669.0,230.5 670.0,231.5 671.0,231.5 672.0,232.5 673.0,232.5 674.0,233.5 675.0,233.5 676.0,234.5 677.0,234.5 678.0,235.5 679.0,235.5 680.0,236.5 681.0,236.5 682.0,237.5 683.0,237.5 684.0,238.5 685.0,238.5 686.0,239.5 687.0,239.5 688.0,240.5 689.0,240.5 690.0,240.5 691.0,240.5 692.0,241.5 693.0,241.5 694.0,241.5 695.0,241.5 696.0,241.5 697.0,241.5 698.0,241.5 699.0,241.5 700.0,241.5 701.0,241.5 702.0,241.5 703.0,241.5 704.0,241.5 705.0,241.5 706.0,240.5 707.0,240.5 708.0,240.5 709.0,239.5 710.0,239.5 711.0,238.5 712.0,238.5 713.0,238.5 714.0,237.5 715.0,237.5 716.0,236.5 717.0,236.5 718.0,235.5 719.0,234.5 720.0,234.5 721.0,233.5 722.0,233.5 723.0,232.5 724.0,232.5 725.0,231.5 726.0,231.5 727.0,230.5 728.0,230.5 729.0,229.5 730.0,229.5 731.0,228.5 732.0,228.5 733.0,227.5 734.0,227.5 735.0,227.5 736.0,227.5 737.0,226.5 738.0,226.5 739.0,226.5 740.0,226.5 741.0,226.5 742.0,226.5 743.0,226.5 744.0,226.5 745.0,226.5 746.0,226.5 747.0,226.5 748.0,226.5 749.0,226.5 750.0,226.5 751.0,227.5 752.0,227.5 753.0,227.5 754.0,228.5 755.0,228.5 756.0,228.5 757.0,229.5 758.0,229.5 759.0,230.5 760.0,230.5 761.0,231.5 762.0,231.5 763.0,232.5 764.0,233.5 765.0,233.5 766.0,234.5 767.0,234.5 768.0,235.5 769.0,235.5 770.0,236.5 771.0,236.5 772.0,237.5 773.0,237.5 774.0,238.5 775.0,238.5 776.0,239.5 777.0,239.5 778.0,240.5 779.0,240.5 780.0,240.5 781.0,240.5 782.0,241.5 783.0,241.5 784.0,241.5 785.0,241.5 786.0,241.5 787.0,241.5 788.0,241.5 789.0,241.5 790.0,241.5 791.0,241.5 792.0,241.5 793.0,241.5 794.0,241.5 795.0,240.5 796.0,240.5 797.0,240.5 798.0,239.5 799.0,239.5 800.0,239.5 801.0,238.5 802.0,238.5 803.0,237.5 804.0,237.5 805.0,236.5 806.0,236.5 807.0,235.5 808.0,235.5 809.0,234.5 810.0,233.5 811.0,233.5 812.0,232.5 813.0,232.5 814.0,231.5 815.0,231.5 816.0,230.5 817.0,230.5 818.0,229.5 819.0,229.5 820.0,228.5 821.0,228.5 822.0,227.5 823.0,227.5 824.0,227.5 825.0,226.5 826.0,226.5 827.0,226.5 828.0,226.5 829.0,226.5 830.0,226.5 831.0,226.5 832.0,226.5 833.0,226.5 834.0,226.5 835.0,226.5 836.0,226.5 837.0,226.5 838.0,226.5 839.0,227.5 840.0,227.5 841.0,227.5 842.0,228.5 843.0,228.5 844.0,228.5 845.0,229.5 846.0,229.5 847.0,230.5 848.0,230.5 849.0,231.5 850.0,231.5 851.0,232.5 852.0,233.5 853.0,233.5 854.0,234.5 855.0,234.5 856.0,235.5 857.0,235.5 858.0,236.5 859.0,236.5 860.0,237.5 861.0,238.5 862.0,238.5 863.0,238.5 864.0,239.5 865.0,239.5 866.0,240.5 867.0,240.5 868.0,240.5 869.0,241.5 870.0,241.5 871.0,241.5 872.0,241.5 873.0,241.5 874.0,241.5 875.0,241.5 876.0,241.5 877.0,241.5 878.0,241.5 879.0,241.5 880.0,241.5 881.0,241.5 882.0,240.5 883.0,240.5 884.0,240.5 885.0,239.5 886.0,239.5 887.0,239.5 888.0,238.5 889.0,238.5 890.0,237.5 891.0,237.5 892.0,236.5 893.0,236.5 894.0,235.5 895.0,234.5 896.0,234.5 897.0,233.5 898.0,233.5 899.0,232.5 900.0,232.5 901.0,231.5 902.0,230.5 903.0,230.5 904.0,229.5 905.0,229.5 906.0,228.5 907.0,228.5 908.0,228.5 909.0,227.5 910.0,227.5 911.0,227.5 912.0,226.5 913.0,226.5 914.0,226.5 915.0,226.5 916.0,226.5 917.0,226.5 918.0,226.5 919.0,226.5 920.0,226.5 921.0,226.5 922.0,226.5 923.0,226.5 924.0,226.5 925.0,226.5 926.0,227.5 927.0,227.5 928.0,227.5 929.0,228.5 930.0,228.5 931.0,229.5 932.0,229.5 933.0,230.5 934.0,230.5 935.0,231.5 936.0,231.5 937.0,232.5 938.0,233.5 939.0,233.5 940.0,234.5 941.0,234.5 942.0,235.5 943.0,236.5 944.0,236.5 945.0,237.5 946.0,237.5 947.0,238.5 948.0,238.5 949.0,239.5 950.0,239.5 951.0,239.5" fill="none" stroke="#d0f5d0" stroke-width="1.2" stroke-linejoin="round"/>
<polyline points="353.0,427.5 357.0,426.5 358.0,426.5 359.0,426.5 360.0,426.5 361.0,426.5 362.0,426.5 363.0,426.5 364.0,426.5 365.0,426.5 366.0,426.5 367.0,426.5 368.0,426.5 369.0,426.5 370.0,426.5 371.0,426.5 372.0,426.5 373.0,426.5 374.0,427.5 375.0,427.5 376.0,427.5 377.0,427.5 378.0,428.5 379.0,428.5 380.0,428.5 381.0,428.5 382.0,429.5 383.0,429.5 384.0,429.5 385.0,430.5 386.0,430.5 387.0,431.5 388.0,431.5 389.0,431.5 390.0,432.5 391.0,432.5 392.0,432.5 393.0,433.5 394.0,433.5 395.0,434.5 396.0,434.5 397.0,434.5 398.0,435.5 399.0,435.5 400.0,435.5 401.0,435.5 402.0,436.5 403.0,436.5 404.0,436.5 405.0,436.5 406.0,437.5 407.0,437.5 408.0,437.5 409.0,437.5 410.0,437.5 411.0,437.5 412.0,437.5 413.0,437.5 414.0,437.5 415.0,437.5 416.0,437.5 417.0,437.5 418.0,437.5 419.0,437.5 420.0,437.5 421.0,437.5 422.0,437.5 423.0,436.5 424.0,436.5 425.0,436.5 426.0,436.5 427.0,436.5 428.0,435.5 429.0,435.5 430.0,435.5 431.0,434.5 432.0,434.5 433.0,434.5 434.0,433.5 435.0,433.5 436.0,433.5 437.0,432.5 438.0,432.5 439.0,431.5 440.0,431.5 441.0,431.5 442.0,430.5 443.0,430.5 444.0,430.5 445.0,429.5 446.0,429.5 447.0,428.5 448.0,428.5 449.0,428.5 450.0,428.5 451.0,427.5 452.0,427.5 453.0,427.5 454.0,427.5 455.0,426.5 456.0,426.5 457.0,426.5 458.0,426.5 459.0,426.5 460.0,426.5 461.0,426.5 462.0,426.5 463.0,426.5 464.0,426.5 465.0,426.5 466.0,426.5 467.0,426.5 468.0,426.5 469.0,426.5 470.0,426.5 471.0,426.5 472.0,426.5 473.0,427.5 474.0,427.5 475.0,427.5 476.0,427.5 477.0,428.5 478.0,428.5 479.0,428.5 480.0,429.5 481.0,429.5 482.0,429.5 483.0,430.5 484.0,430.5 485.0,430.5 486.0,431.5 487.0,431.5 488.0,432.5 489.0,432.5 490.0,432.5 491.0,433.5 492.0,433.5 493.0,434.5 494.0,434.5 495.0,434.5 496.0,435.5 497.0,435.5 498.0,435.5 499.0,435.5 500.0,436.5 501.0,436.5 502.0,436.5 503.0,436.5 504.0,437.5 505.0,437.5 506.0,437.5 507.0,437.5 508.0,437.5 509.0,437.5 510.0,437.5 511.0,437.5 512.0,437.5 513.0,437.5 514.0,437.5 515.0,437.5 516.0,437.5 517.0,437.5 518.0,437.5 519.0,437.5 520.0,437.5 521.0,436.5 522.0,436.5 523.0,436.5 524.0,436.5 525.0,435.5 526.0,435.5 527.0,435.5 528.0,434.5 529.0,434.5 530.0,434.5 531.0,433.5 532.0,433.5 533.0,432.5 534.0,432.5 535.0,432.5 536.0,431.5 537.0,431.5 538.0,430.5 539.0,430.5 540.0,430.5 541.0,429.5 542.0,429.5 543.0,429.5 544.0,428.5 545.0,428.5 546.0,428.5 547.0,427.5 548.0,427.5 549.0,427.5 550.0,427.5 551.0,426.5 552.0,426.5 553.0,426.5 554.0,426.5 555.0,426.5 556.0,426.5 557.0,426.5 558.0,426.5 559.0,426.5 560.0,426.5 561.0,426.5 562.0,426.5 563.0,426.5 564.0,426.5 565.0,426.5 566.0,426.5 567.0,426.5 568.0,426.5 569.0,427.5 570.0,427.5 571.0,427.5 572.0,428.5 573.0,428.5 574.0,428.5 575.0,428.5 576.0,429.5 577.0,429.5 578.0,430.5 579.0,430.5 580.0,430.5 581.0,431.5 582.0,431.5 583.0,432.5 584.0,432.5 585.0,432.5 586.0,433.5 587.0,433.5 588.0,433.5 589.0,434.5 590.0,434.5 591.0,435.5 592.0,435.5 593.0,435.5 594.0,436.5 595.0,436.5 596.0,436.5 597.0,436.5 598.0,437.5 599.0,437.5 600.0,437.5 601.0,437.5 602.0,437.5 603.0,437.5 604.0,437.5 605.0,437.5 606.0,437.5 607.0,437.5 608.0,437.5 609.0,437.5 610.0,437.5 611.0,437.5 612.0,437.5 613.0,437.5 614.0,437.5 615.0,436.5 616.0,436.5 617.0,436.5 618.0,436.5 619.0,435.5 620.0,435.5 621.0,435.5 622.0,434.5 623.0,434.5 624.0,434.5 625.0,433.5 626.0,433.5 627.0,432.5 628.0,432.5 629.0,432.5 630.0,431.5 631.0,431.5 632.0,430.5 633.0,430.5 634.0,430.5 635.0,429.5 636.0,429.5 637.0,429.5 638.0,428.5 639.0,428.5 640.0,428.5 641.0,427.5 642.0,427.5 643.0,427.5 644.0,426.5 645.0,426.5 646.0,426.5 647.0,426.5 648.0,426.5 649.0,426.5 650.0,426.5 651.0,426.5 652.0,426.5 653.0,426.5 654.0,426.5 655.0,426.5 656.0,426.5 657.0,426.5 658.0,426.5 659.0,426.5 660.0,426.5 661.0,426.5 662.0,427.5 663.0,427.5 664.0,427.5 665.0,428.5 666.0,428.5 667.0,428.5 668.0,429.5 669.0,429.5 670.0,429.5 671.0,430.5 672.0,430.5 673.0,430.5 674.0,431.5 675.0,431.5 676.0,432.5 677.0,432.5 678.0,432.5 679.0,433.5 680.0,433.5 681.0,434.5 682.0,434.5 683.0,434.5 684.0,435.5 685.0,435.5 686.0,435.5 687.0,436.5 688.0,436.5 689.0,436.5 690.0,436.5 691.0,437.5 692.0,437.5 693.0,437.5 694.0,437.5 695.0,437.5 696.0,437.5 697.0,437.5 698.0,437.5 699.0,437.5 700.0,437.5 701.0,437.5 702.0,437.5 703.0,437.5 704.0,437.5 705.0,437.5 706.0,437.5 707.0,436.5 708.0,436.5 709.0,436.5 710.0,436.5 711.0,435.5 712.0,435.5 713.0,435.5 714.0,434.5 715.0,434.5 716.0,433.5 717.0,433.5 718.0,433.5 719.0,432.5 720.0,432.5 721.0,431.5 722.0,431.5 723.0,431.5 724.0,430.5 725.0,430.5 726.0,429.5 727.0,429.5 728.0,429.5 729.0,428.5 730.0,428.5 731.0,428.5 732.0,427.5 733.0,427.5 734.0,427.5 735.0,426.5 736.0,426.5 737.0,426.5 738.0,426.5 739.0,426.5 740.0,426.5 741.0,426.5 742.0,426.5 743.0,426.5 744.0,426.5 745.0,426.5 746.0,426.5 747.0,426.5 748.0,426.5 749.0,426.5 750.0,426.5 751.0,426.5 752.0,427.5 753.0,427.5 754.0,427.5 755.0,427.5 756.0,428.5 757.0,428.5 758.0,428.5 759.0,429.5 760.0,429.5 761.0,430.5 762.0,430.5 763.0,430.5 764.0,431.5 765.0,431.5 766.0,432.5 767.0,432.5 768.0,432.5 769.0,433.5 770.0,433.5 771.0,434.5 772.0,434.5 773.0,434.5 774.0,435.5 775.0,435.5 776.0,435.5 777.0,436.5 778.0,436.5 779.0,436.5 780.0,437.5 781.0,437.5 782.0,437.5 783.0,437.5 784.0,437.5 785.0,437.5 786.0,437.5 787.0,437.5 788.0,437.5 789.0,437.5 790.0,437.5 791.0,437.5 792.0,437.5 793.0,437.5 794.0,437.5 795.0,437.5 796.0,436.5 797.0,436.5 798.0,436.5 799.0,436.5 800.0,435.5 801.0,435.5 802.0,435.5 803.0,434.5 804.0,434.5 805.0,433.5 806.0,433.5 807.0,433.5 808.0,432.5 809.0,432.5 810.0,431.5 811.0,431.5 812.0,431.5 813.0,430.5 814.0,430.5 815.0,429.5 816.0,429.5 817.0,429.5 818.0,428.5 819.0,428.5 820.0,428.5 821.0,427.5 822.0,427.5 823.0,427.5 824.0,426.5 825.0,426.5 826.0,426.5 827.0,426.5 828.0,426.5 829.0,426.5 830.0,426.5 831.0,426.5 832.0,426.5 833.0,426.5 834.0,426.5 835.0,426.5 836.0,426.5 837.0,426.5 838.0,426.5 839.0,426.5 840.0,427.5 841.0,427.5 842.0,427.5 843.0,427.5 844.0,428.5 845.0,428.5 846.0,428.5 847.0,429.5 848.0,429.5 849.0,430.5 850.0,430.5 851.0,430.5 852.0,431.5 853.0,431.5 854.0,432.5 855.0,432.5 856.0,432.5 857.0,433.5 858.0,433.5 859.0,434.5 860.0,434.5 861.0,434.5 862.0,435.5 863.0,435.5 864.0,436.5 865.0,436.5 866.0,436.5 867.0,436.5 868.0,437.5 869.0,437.5 870.0,437.5 871.0,437.5 872.0,437.5 873.0,437.5 874.0,437.5 875.0,437.5 876.0,437.5 877.0,437.5 878.0,437.5 879.0,437.5 880.0,437.5 881.0,437.5 882.0,437.5 883.0,436.5 884.0,436.5 885.0,436.5 886.0,436.5 887.0,435.5 888.0,435.5 889.0,435.5 890.0,434.5 891.0,434.5 892.0,433.5 893.0,433.5 894.0,433.5 895.0,432.5 896.0,432.5 897.0,431.5 898.0,431.5 899.0,430.5 900.0,430.5 901.0,430.5 902.0,429.5 903.0,429.5 904.0,428.5 905.0,428.5 906.0,428.5 907.0,427.5 908.0,427.5 909.0,427.5 910.0,427.5 911.0,426.5 912.0,426.5 913.0,426.5 914.0,426.5 915.0,426.5 916.0,426.5 917.0,426.5 918.0,426.5 919.0,426.5 920.0,426.5 921.0,426.5 922.0,426.5 923.0,426.5 924.0,426.5 925.0,426.5 926.0,426.5 927.0,427.5 928.0,427.5 929.0,427.5 930.0,428.5 931.0,428.5 932.0,428.5 933.0,429.5 934.0,429.5 935.0,430.5 936.0,430.5 937.0,430.5 938.0,431.5 939.0,431.5 940.0,432.5 941.0,432.5 942.0,433.5 943.0,433.5 944.0,433.5 945.0,434.5 946.0,434.5 947.0,435.5 948.0,435.5 949.0,435.5 950.0,436.5 951.0,436.5" fill="none" stroke="#d0f5d0" stroke-width="1.2" stroke-linejoin="round"/>
<polyline points="353.0,469.5 357.0,469.5 358.0,469.5 359.0,469.5 360.0,469.5 361.0,469.5 362.0,469.5 363.0,469.5 364.0,469.5 365.0,469.5 366.0,469.5 367.0,469.5 368.0,469.5 369.0,469.5 370.0,469.5 371.0,469.5 372.0,469.5 373.0,469.5 374.0,469.5 375.0,470.5 376.0,470.5 377.0,470.5 378.0,470.5 379.0,470.5 380.0,471.5 381.0,471.5 382.0,471.5 383.0,472.5 384.0,472.5 385.0,472.5 386.0,472.5 387.0,473.5 388.0,473.5 389.0,473.5 390.0,474.5 391.0,474.5 392.0,474.5 393.0,475.5 394.0,475.5 395.0,475.5 396.0,475.5 397.0,476.5 398.0,476.5 399.0,476.5 400.0,477.5 401.0,477.5 402.0,477.5 403.0,477.5 404.0,477.5 405.0,478.5 406.0,478.5 407.0,478.5 408.0,478.5 409.0,478.5 410.0,478.5 411.0,478.5 412.0,478.5 413.0,478.5 414.0,478.5 415.0,478.5 416.0,478.5 417.0,478.5 418.0,478.5 419.0,478.5 420.0,478.5 421.0,478.5 422.0,478.5 423.0,478.5 424.0,477.5 425.0,477.5 426.0,477.5 427.0,477.5 428.0,477.5 429.0,476.5 430.0,476.5 431.0,476.5 432.0,476.5 433.0,475.5 434.0,475.5 435.0,475.5 436.0,474.5 437.0,474.5 438.0,474.5 439.0,473.5 440.0,473.5 441.0,473.5 442.0,472.5 443.0,472.5 444.0,472.5 445.0,472.5 446.0,471.5 447.0,471.5 448.0,471.5 449.0,470.5 450.0,470.5 451.0,470.5 452.0,470.5 453.0,470.5 454.0,469.5 455.0,469.5 456.0,469.5 457.0,469.5 458.0,469.5 459.0,469.5 460.0,469.5 461.0,469.5 462.0,469.5 463.0,469.5 464.0,469.5 465.0,469.5 466.0,469.5 467.0,469.5 468.0,469.5 469.0,469.5 470.0,469.5 471.0,469.5 472.0,469.5 473.0,469.5 474.0,470.5 475.0,470.5 476.0,470.5 477.0,470.5 478.0,471.5 479.0,471.5 480.0,471.5 481.0,471.5 482.0,472.5 483.0,472.5 484.0,472.5 485.0,473.5 486.0,473.5 487.0,473.5 488.0,474.5 489.0,474.5 490.0,474.5 491.0,475.5 492.0,475.5 493.0,475.5 494.0,475.5 495.0,476.5 496.0,476.5 497.0,476.5 498.0,477.5 499.0,477.5 500.0,477.5 501.0,477.5 502.0,477.5 503.0,478.5 504.0,478.5 505.0,478.5 506.0,478.5 507.0,478.5 508.0,478.5 509.0,478.5 510.0,478.5 511.0,478.5 512.0,478.5 513.0,478.5 514.0,478.5 515.0,478.5 516.0,478.5 517.0,478.5 518.0,478.5 519.0,478.5 520.0,478.5 521.0,477.5 522.0,477.5 523.0,477.5 524.0,477.5 525.0,477.5 526.0,476.5 527.0,476.5 528.0,476.5 529.0,476.5 530.0,475.5 531.0,475.5 532.0,475.5 533.0,474.5 534.0,474.5 535.0,474.5 536.0,473.5 537.0,473.5 538.0,473.5 539.0,472.5 540.0,472.5 541.0,472.5 542.0,471.5 543.0,471.5 544.0,471.5 545.0,471.5 546.0,470.5 547.0,470.5 548.0,470.5 549.0,470.5 550.0,469.5 551.0,469.5 552.0,469.5 553.0,469.5 554.0,469.5 555.0,469.5 556.0,469.5 557.0,469.5 558.0,469.5 559.0,469.5 560.0,469.5 561.0,469.5 562.0,469.5 563.0,469.5 564.0,469.5 565.0,469.5 566.0,469.5 567.0,469.5 568.0,469.5 569.0,470.5 570.0,470.5 571.0,470.5 572.0,470.5 573.0,470.5 574.0,471.5 575.0,471.5 576.0,471.5 577.0,472.5 578.0,472.5 579.0,472.5 580.0,473.5 581.0,473.5 582.0,473.5 583.0,474.5 584.0,474.5 585.0,474.5 586.0,475.5 587.0,475.5 588.0,475.5 589.0,475.5 590.0,476.5 591.0,476.5 592.0,476.5 593.0,477.5 594.0,477.5 595.0,477.5 596.0,477.5 597.0,477.5 598.0,478.5 599.0,478.5 600.0,478.5 601.0,478.5 602.0,478.5 603.0,478.5 604.0,478.5 605.0,478.5 606.0,478.5 607.0,478.5 608.0,478.5 609.0,478.5 610.0,478.5 611.0,478.5 612.0,478.5 613.0,478.5 614.0,478.5 615.0,478.5 616.0,477.5 617.0,477.5 618.0,477.5 619.0,477.5 620.0,476.5 621.0,476.5 622.0,476.5 623.0,476.5 624.0,475.5 625.0,475.5 626.0,475.5 627.0,474.5 628.0,474.5 629.0,474.5 630.0,473.5 631.0,473.5 632.0,473.5 633.0,472.5 634.0,472.5 635.0,472.5 636.0,471.5 637.0,471.5 638.0,471.5 639.0,470.5 640.0,470.5 641.0,470.5 642.0,470.5 643.0,470.5 644.0,469.5 645.0,469.5 646.0,469.5 647.0,469.5 648.0,469.5 649.0,469.5 650.0,469.5 651.0,469.5 652.0,469.5 653.0,469.5 654.0,469.5 655.0,469.5 656.0,469.5 657.0,469.5 658.0,469.5 659.0,469.5 660.0,469.5 661.0,469.5 662.0,470.5 663.0,470.5 664.0,470.5 665.0,470.5 666.0,470.5 667.0,471.5 668.0,471.5 669.0,471.5 670.0,472.5 671.0,472.5 672.0,472.5 673.0,473.5 674.0,473.5 675.0,473.5 676.0,474.5 677.0,474.5 678.0,474.5 679.0,475.5 680.0,475.5 681.0,475.5 682.0,476.5 683.0,476.5 684.0,476.5 685.0,476.5 686.0,477.5 687.0,477.5 688.0,477.5 689.0,477.5 690.0,478.5 691.0,478.5 692.0,478.5 693.0,478.5 694.0,478.5 695.0,478.5 696.0,478.5 697.0,478.5 698.0,478.5 699.0,478.5 700.0,478.5 701.0,478.5 702.0,478.5 703.0,478.5 704.0,478.5 705.0,478.5 706.0,478.5 707.0,478.5 708.0,477.5 709.0,477.5 710.0,477.5 711.0,477.5 712.0,476.5 713.0,476.5 714.0,476.5 715.0,475.5 716.0,475.5 717.0,475.5 718.0,474.5 719.0,474.5 720.0,474.5 721.0,473.5 722.0,473.5 723.0,473.5 724.0,472.5 725.0,472.5 726.0,472.5 727.0,471.5 728.0,471.5 729.0,471.5 730.0,470.5 731.0,470.5 732.0,470.5 733.0,470.5 734.0,470.5 735.0,469.5 736.0,469.5 737.0,469.5 738.0,469.5 739.0,469.5 740.0,469.5 741.0,469.5 742.0,469.5 743.0,469.5 744.0,469.5 745.0,469.5 746.0,469.5 747.0,469.5 748.0,469.5 749.0,469.5 750.0,469.5 751.0,469.5 752.0,469.5 753.0,470.5 754.0,470.5 755.0,470.5 756.0,470.5 757.0,471.5 758.0,471.5 759.0,471.5 760.0,472.5 761.0,472.5 762.0,472.5 763.0,473.5 764.0,473.5 765.0,473.5 766.0,474.5 767.0,474.5 768.0,474.5 769.0,475.5 770.0,475.5 771.0,475.5 772.0,476.5 773.0,476.5 774.0,476.5 775.0,476.5 776.0,477.5 777.0,477.5 778.0,477.5 779.0,477.5 780.0,478.5 781.0,478.5 782.0,478.5 783.0,478.5 784.0,478.5 785.0,478.5 786.0,478.5 787.0,478.5 788.0,478.5 789.0,478.5 790.0,478.5 791.0,478.5 792.0,478.5 793.0,478.5 794.0,478.5 795.0,478.5 796.0,478.5 797.0,477.5 798.0,477.5 799.0,477.5 800.0,477.5 801.0,476.5 802.0,476.5 803.0,476.5 804.0,475.5 805.0,475.5 806.0,475.5 807.0,474.5 808.0,474.5 809.0,474.5 810.0,473.5 811.0,473.5 812.0,473.5 813.0,472.5 814.0,472.5 815.0,472.5 816.0,471.5 817.0,471.5 818.0,471.5 819.0,470.5 820.0,470.5 821.0,470.5 822.0,470.5 823.0,469.5 824.0,469.5 825.0,469.5 826.0,469.5 827.0,469.5 828.0,469.5 829.0,469.5 830.0,469.5 831.0,469.5 832.0,469.5 833.0,469.5 834.0,469.5 835.0,469.5 836.0,469.5 837.0,469.5 838.0,469.5 839.0,469.5 840.0,469.5 841.0,470.5 842.0,470.5 843.0,470.5 844.0,470.5 845.0,471.5 846.0,471.5 847.0,471.5 848.0,472.5 849.0,472.5 850.0,472.5 851.0,473.5 852.0,473.5 853.0,473.5 854.0,474.5 855.0,474.5 856.0,474.5 857.0,475.5 858.0,475.5 859.0,475.5 860.0,476.5 861.0,476.5 862.0,476.5 863.0,477.5 864.0,477.5 865.0,477.5 866.0,477.5 867.0,478.5 868.0,478.5 869.0,478.5 870.0,478.5 871.0,478.5 872.0,478.5 873.0,478.5 874.0,478.5 875.0,478.5 876.0,478.5 877.0,478.5 878.0,478.5 879.0,478.5 880.0,478.5 881.0,478.5 882.0,478.5 883.0,478.5 884.0,477.5 885.0,477.5 886.0,477.5 887.0,477.5 888.0,476.5 889.0,476.5 890.0,476.5 891.0,475.5 892.0,475.5 893.0,475.5 894.0,474.5 895.0,474.5 896.0,474.5 897.0,473.5 898.0,473.5 899.0,473.5 900.0,472.5 901.0,472.5 902.0,472.5 903.0,471.5 904.0,471.5 905.0,471.5 906.0,470.5 907.0,470.5 908.0,470.5 909.0,470.5 910.0,469.5 911.0,469.5 912.0,469.5 913.0,469.5 914.0,469.5 915.0,469.5 916.0,469.5 917.0,469.5 918.0,469.5 919.0,469.5 920.0,469.5 921.0,469.5 922.0,469.5 923.0,469.5 924.0,469.5 925.0,469.5 926.0,469.5 927.0,470.5 928.0,470.5 929.0,470.5 930.0,470.5 931.0,471.5 932.0,471.5 933.0,471.5 934.0,472.5 935.0,472.5 936.0,472.5 937.0,473.5 938.0,473.5 939.0,473.5 940.0,474.5 941.0,474.5 942.0,474.5 943.0,475.5 944.0,475.5 945.0,475.5 946.0,476.5 947.0,476.5 948.0,476.5 949.0,477.5 950.0,477.5 951.0,477.5" fill="none" stroke="#f5d0e2" stroke-width="1.2" stroke-linejoin="round"/>
<polyline points="353.0,602.9 357.0,601.1 358.0,600.5 359.0,599.9 360.0,599.4 361.0,599.1 362.0,598.8 363.0,598.6 364.0,598.5 365.0,598.5 366.0,598.6 367.0,598.8 368.0,599.1 369.0,599.5 370.0,600.0 371.0,600.6 372.0,601.3 373.0,602.0 374.0,602.9 375.0,603.8 376.0,604.8 377.0,605.9 378.0,607.0 379.0,608.2 380.0,609.5 381.0,610.8 382.0,612.2 383.0,613.7 384.0,615.1 385.0,616.6 386.0,618.1 387.0,619.7 388.0,621.3 389.0,622.8 390.0,624.4 391.0,626.0 392.0,627.5 393.0,629.1 394.0,630.6 395.0,632.1 396.0,633.6 397.0,635.0 398.0,636.4 399.0,637.7 400.0,639.0 401.0,640.2 402.0,641.3 403.0,642.4 404.0,643.4 405.0,644.3 406.0,645.2 407.0,645.9 408.0,646.6 409.0,647.1 410.0,647.6 411.0,648.0 412.0,648.2 413.0,648.4 414.0,648.5 415.0,648.5 416.0,648.3 417.0,648.1 418.0,647.8 419.0,647.4 420.0,646.8 421.0,646.2 422.0,645.5 423.0,644.7 424.0,643.8 425.0,642.9 426.0,641.8 427.0,640.7 428.0,639.5 429.0,638.2 430.0,636.9 431.0,635.5 432.0,634.1 433.0,632.7 434.0,631.1 435.0,629.6 436.0,628.1 437.0,626.5 438.0,624.9 439.0,623.3 440.0,621.7 441.0,620.1 442.0,618.5 443.0,616.9 444.0,615.4 445.0,613.9 446.0,612.5 447.0,611.0 448.0,609.7 449.0,608.4 450.0,607.1 451.0,605.9 452.0,604.8 453.0,603.8 454.0,602.9 455.0,602.0 456.0,601.2 457.0,600.5 458.0,599.9 459.0,599.5 460.0,599.1 461.0,598.8 462.0,598.6 463.0,598.5 464.0,598.5 465.0,598.7 466.0,598.9 467.0,599.2 468.0,599.6 469.0,600.2 470.0,600.8 471.0,601.5 472.0,602.4 473.0,603.3 474.0,604.3 475.0,605.3 476.0,606.5 477.0,607.7 478.0,609.0 479.0,610.3 480.0,611.7 481.0,613.2 482.0,614.7 483.0,616.2 484.0,617.8 485.0,619.4 486.0,621.0 487.0,622.6 488.0,624.2 489.0,625.9 490.0,627.5 491.0,629.1 492.0,630.6 493.0,632.2 494.0,633.7 495.0,635.2 496.0,636.6 497.0,637.9 498.0,639.2 499.0,640.5 500.0,641.6 501.0,642.7 502.0,643.7 503.0,644.6 504.0,645.5 505.0,646.2 506.0,646.8 507.0,647.4 508.0,647.8 509.0,648.1 510.0,648.4 511.0,648.5 512.0,648.5 513.0,648.4 514.0,648.2 515.0,647.9 516.0,647.5 517.0,647.0 518.0,646.3 519.0,645.6 520.0,644.8 521.0,643.9 522.0,642.9 523.0,641.8 524.0,640.7 525.0,639.5 526.0,638.2 527.0,636.8 528.0,635.4 529.0,633.9 530.0,632.4 531.0,630.8 532.0,629.2 533.0,627.6 534.0,626.0 535.0,624.3 536.0,622.7 537.0,621.1 538.0,619.4 539.0,617.8 540.0,616.2 541.0,614.6 542.0,613.1 543.0,611.6 544.0,610.2 545.0,608.8 546.0,607.5 547.0,606.3 548.0,605.1 549.0,604.0 550.0,603.1 551.0,602.1 552.0,601.3 553.0,600.6 554.0,600.0 555.0,599.5 556.0,599.1 557.0,598.8 558.0,598.6 559.0,598.5 560.0,598.5 561.0,598.7 562.0,598.9 563.0,599.3 564.0,599.7 565.0,600.3 566.0,601.0 567.0,601.8 568.0,602.6 569.0,603.6 570.0,604.6 571.0,605.8 572.0,607.0 573.0,608.3 574.0,609.6 575.0,611.1 576.0,612.5 577.0,614.1 578.0,615.6 579.0,617.2 580.0,618.8 581.0,620.5 582.0,622.2 583.0,623.8 584.0,625.5 585.0,627.2 586.0,628.8 587.0,630.4 588.0,632.0 589.0,633.6 590.0,635.1 591.0,636.6 592.0,638.0 593.0,639.3 594.0,640.6 595.0,641.7 596.0,642.9 597.0,643.9 598.0,644.8 599.0,645.6 600.0,646.4 601.0,647.0 602.0,647.5 603.0,647.9 604.0,648.2 605.0,648.4 606.0,648.5 607.0,648.5 608.0,648.3 609.0,648.1 610.0,647.7 611.0,647.2 612.0,646.6 613.0,645.9 614.0,645.1 615.0,644.2 616.0,643.2 617.0,642.1 618.0,641.0 619.0,639.7 620.0,638.4 621.0,637.0 622.0,635.6 623.0,634.0 624.0,632.5 625.0,630.9 626.0,629.3 627.0,627.6 628.0,625.9 629.0,624.2 630.0,622.5 631.0,620.8 632.0,619.2 633.0,617.5 634.0,615.9 635.0,614.3 636.0,612.7 637.0,611.2 638.0,609.7 639.0,608.4 640.0,607.0 641.0,605.8 642.0,604.6 643.0,603.6 644.0,602.6 645.0,601.7 646.0,600.9 647.0,600.2 648.0,599.7 649.0,599.2 650.0,598.9 651.0,598.6 652.0,598.5 653.0,598.5 654.0,598.6 655.0,598.9 656.0,599.2 657.0,599.7 658.0,600.2 659.0,600.9 660.0,601.7 661.0,602.6 662.0,603.6 663.0,604.7 664.0,605.8 665.0,607.1 666.0,608.4 667.0,609.8 668.0,611.3 669.0,612.8 670.0,614.4 671.0,616.0 672.0,617.7 673.0,619.4 674.0,621.1 675.0,622.8 676.0,624.5 677.0,626.2 678.0,627.9 679.0,629.6 680.0,631.2 681.0,632.9 682.0,634.4 683.0,636.0 684.0,637.4 685.0,638.8 686.0,640.1 687.0,641.4 688.0,642.6 689.0,643.6 690.0,644.6 691.0,645.5 692.0,646.2 693.0,646.9 694.0,647.5 695.0,647.9 696.0,648.2 697.0,648.4 698.0,648.5 699.0,648.5 700.0,648.3 701.0,648.0 702.0,647.6 703.0,647.1 704.0,646.5 705.0,645.8 706.0,644.9 707.0,644.0 708.0,642.9 709.0,641.8 710.0,640.6 711.0,639.3 712.0,637.9 713.0,636.4 714.0,634.9 715.0,633.3 716.0,631.7 717.0,630.1 718.0,628.4 719.0,626.6 720.0,624.9 721.0,623.2 722.0,621.4 723.0,619.7 724.0,618.0 725.0,616.3 726.0,614.7 727.0,613.0 728.0,611.5 729.0,610.0 730.0,608.6 731.0,607.2 732.0,605.9 733.0,604.7 734.0,603.6 735.0,602.6 736.0,601.7 737.0,600.9 738.0,600.2 739.0,599.6 740.0,599.2 741.0,598.8 742.0,598.6 743.0,598.5 744.0,598.5 745.0,598.7 746.0,599.0 747.0,599.3 748.0,599.9 749.0,600.5 750.0,601.2 751.0,602.1 752.0,603.0 753.0,604.1 754.0,605.2 755.0,606.5 756.0,607.8 757.0,609.2 758.0,610.7 759.0,612.2 760.0,613.8 761.0,615.5 762.0,617.2 763.0,618.9 764.0,620.6 765.0,622.4 766.0,624.2 767.0,625.9 768.0,627.7 769.0,629.4 770.0,631.1 771.0,632.8 772.0,634.4 773.0,635.9 774.0,637.4 775.0,638.9 776.0,640.2 777.0,641.5 778.0,642.7 779.0,643.8 780.0,644.8 781.0,645.6 782.0,646.4 783.0,647.1 784.0,647.6 785.0,648.0 786.0,648.3 787.0,648.5 788.0,648.5 789.0,648.4 790.0,648.2 791.0,647.9 792.0,647.4 793.0,646.8 794.0,646.1 795.0,645.3 796.0,644.4 797.0,643.4 798.0,642.2 799.0,641.0 800.0,639.7 801.0,638.3 802.0,636.8 803.0,635.3 804.0,633.7 805.0,632.0 806.0,630.3 807.0,628.6 808.0,626.8 809.0,625.1 810.0,623.3 811.0,621.5 812.0,619.7 813.0,618.0 814.0,616.2 815.0,614.5 816.0,612.9 817.0,611.3 818.0,609.8 819.0,608.3 820.0,606.9 821.0,605.6 822.0,604.4 823.0,603.3 824.0,602.3 825.0,601.4 826.0,600.6 827.0,600.0 828.0,599.4 829.0,599.0 830.0,598.7 831.0,598.5 832.0,598.5 833.0,598.6 834.0,598.8 835.0,599.2 836.0,599.6 837.0,600.2 838.0,601.0 839.0,601.8 840.0,602.7 841.0,603.8 842.0,604.9 843.0,606.2 844.0,607.5 845.0,609.0 846.0,610.5 847.0,612.1 848.0,613.7 849.0,615.4 850.0,617.1 851.0,618.9 852.0,620.6 853.0,622.4 854.0,624.3 855.0,626.1 856.0,627.9 857.0,629.6 858.0,631.4 859.0,633.1 860.0,634.7 861.0,636.3 862.0,637.8 863.0,639.3 864.0,640.6 865.0,641.9 866.0,643.1 867.0,644.2 868.0,645.1 869.0,646.0 870.0,646.7 871.0,647.3 872.0,647.8 873.0,648.2 874.0,648.4 875.0,648.5 876.0,648.5 877.0,648.3 878.0,648.0 879.0,647.6 880.0,647.0 881.0,646.3 882.0,645.5 883.0,644.6 884.0,643.6 885.0,642.4 886.0,641.2 887.0,639.9 888.0,638.4 889.0,636.9 890.0,635.4 891.0,633.7 892.0,632.0 893.0,630.3 894.0,628.5 895.0,626.7 896.0,624.9 897.0,623.1 898.0,621.3 899.0,619.4 900.0,617.6 901.0,615.9 902.0,614.2 903.0,612.5 904.0,610.9 905.0,609.3 906.0,607.9 907.0,606.5 908.0,605.2 909.0,604.0 910.0,602.9 911.0,601.9 912.0,601.0 913.0,600.3 914.0,599.7 915.0,599.2 916.0,598.8 917.0,598.6 918.0,598.5 919.0,598.5 920.0,598.7 921.0,599.0 922.0,599.5 923.0,600.1 924.0,600.8 925.0,601.6 926.0,602.5 927.0,603.6 928.0,604.8 929.0,606.0 930.0,607.4 931.0,608.9 932.0,610.4 933.0,612.0 934.0,613.7 935.0,615.4 936.0,617.2 937.0,619.0 938.0,620.8 939.0,622.7 940.0,624.5 941.0,626.3 942.0,628.2 943.0,630.0 944.0,631.8 945.0,633.5 946.0,635.1 947.0,636.8 948.0,638.3 949.0,639.7 950.0,641.1 951.0,642.4" fill="none" stroke="#f030f0" stroke-width="1.15" stroke-linejoin="round"/>
</g>
<rect x="350" y="702.3" width="601" height="2.7" fill="#fff"/>
<g shape-rendering="crispEdges">
<rect x="369.1" y="708" width="1" height="3.8" fill="#3ce03c"/>
<rect x="397.8" y="705" width="1" height="6.8" fill="#3ce03c"/>
<rect x="428.3" y="708" width="1" height="3.8" fill="#3ce03c"/>
<rect x="458.7" y="708" width="1" height="3.8" fill="#3ce03c"/>
<rect x="489.2" y="708" width="1" height="3.8" fill="#3ce03c"/>
<rect x="519.6" y="708" width="1" height="3.8" fill="#3ce03c"/>
<rect x="550.1" y="705" width="1" height="6.8" fill="#3ce03c"/>
<rect x="580.6" y="708" width="1" height="3.8" fill="#3ce03c"/>
<rect x="611.0" y="708" width="1" height="3.8" fill="#3ce03c"/>
<rect x="641.5" y="708" width="1" height="3.8" fill="#3ce03c"/>
<rect x="671.9" y="708" width="1" height="3.8" fill="#3ce03c"/>
<rect x="702.4" y="705" width="1" height="6.8" fill="#3ce03c"/>
<rect x="732.9" y="708" width="1" height="3.8" fill="#3ce03c"/>
<rect x="763.3" y="708" width="1" height="3.8" fill="#3ce03c"/>
<rect x="793.8" y="708" width="1" height="3.8" fill="#3ce03c"/>
<rect x="824.2" y="708" width="1" height="3.8" fill="#3ce03c"/>
<rect x="854.7" y="705" width="1" height="6.8" fill="#3ce03c"/>
<rect x="885.2" y="708" width="1" height="3.8" fill="#3ce03c"/>
<rect x="915.6" y="708" width="1" height="3.8" fill="#3ce03c"/>
<rect x="946.1" y="708" width="1" height="3.8" fill="#3ce03c"/>
<rect x="353" y="730" width="598" height="1" fill="#c8c8c8"/>
</g>
</svg>
<div class="t" style="left:-5.6px;top:136.2px">M</div>
<div class="t" style="left:-6.2px;top:556.1px;letter-spacing:0.09px">M - Testbench - Analyze</div>
<div class="t" style="left:205.4px;top:708.2px;letter-spacing:-0.7px">Now</div>
<div class="t" style="left:303.2px;top:708.2px">80 ms</div>
<div class="t" style="left:531.2px;top:713.6px;color:#48f048;letter-spacing:0.08px">9.4 ms</div>
<div class="t" style="left:835.8px;top:713.6px;color:#48f048;letter-spacing:0.08px">9.6 ms</div>
<div class="t" style="left:0.0px;top:5.7px;color:#fff">js_pdm2_24_tb/<span style="letter-spacing:-0.125px">stb_pdm_count</span></div>
<div class="t v" style="left:244.2px;top:5.7px;color:#fff;letter-spacing:0.043px">124691722843</div>
<div class="t" style="left:0.0px;top:85.7px;color:#3fbf4f">js_pdm2_24_tb/<span style="letter-spacing:-0.214px">stb_pdm_value</span></div>
<div class="t v" style="left:244.2px;top:85.7px;color:#3fbf4f;letter-spacing:-0.038px">8383042</div>
<div class="t" style="left:0.0px;top:155.9px;color:#fff">js_pdm2_24_tb/uut/<span style="letter-spacing:-0.819px">SYSTEM_CLK</span></div>
<div class="t v" style="left:244.2px;top:155.9px;color:#fff;letter-spacing:0.000px">1</div>
<div class="t" style="left:0.0px;top:176.0px;color:#fff">js_pdm2_24_tb/uut/<span style="letter-spacing:-0.800px">PDM_VALUE</span></div>
<div class="t v" style="left:244.2px;top:176.0px;color:#fff;letter-spacing:-0.038px">8383042</div>
<div class="t" style="left:0.0px;top:225.7px;color:#fff">js_pdm2_24_tb/uut/<span style="letter-spacing:0.117px">pdm_integrator</span></div>
<div class="t v" style="left:244.2px;top:225.7px;color:#fff;letter-spacing:-0.045px">25164764</div>
<div class="t" style="left:0.0px;top:305.7px;color:#000">js_pdm2_24_tb/uut/<span style="letter-spacing:0.059px">pdm_difference</span></div>
<div class="t v" style="left:244.2px;top:305.7px;color:#000;letter-spacing:0.007px">524272</div>
<div class="t" style="left:0.0px;top:385.7px;color:#fff">js_pdm2_24_tb/uut/<span style="letter-spacing:-0.060px">pdm_temp_value</span></div>
<div class="t v" style="left:244.2px;top:385.7px;color:#fff;letter-spacing:-0.395px">191</div>
<div class="t" style="left:0.0px;top:465.7px;color:#f4c0d0">js_pdm2_24_tb/uut/<span style="letter-spacing:-0.002px">pdm_substracor</span></div>
<div class="t v" style="left:244.2px;top:465.7px;color:#f4c0d0;letter-spacing:-0.395px">191</div>
<div class="t" style="left:0.0px;top:516.0px;color:#fff">js_pdm2_24_tb/uut/<span style="letter-spacing:0.221px">pdm_int</span></div>
<div class="t v" style="left:244.2px;top:516.0px;color:#fff;letter-spacing:0.000px">1</div>
<div class="t" style="left:0.0px;top:536.0px;color:#fff">js_pdm2_24_tb/uut/<span style="letter-spacing:-0.952px">PDM_OUT</span></div>
<div class="t v" style="left:244.2px;top:536.0px;color:#fff;letter-spacing:0.000px">1</div>
<div class="t" style="left:0.0px;top:640.7px;color:#f020f0">js_pdm2_24_tb/<span style="letter-spacing:-0.132px">stb_counter</span></div>
<div class="t v" style="left:244.2px;top:640.7px;color:#f020f0;letter-spacing:0.044px">273105</div>
</body></html>
